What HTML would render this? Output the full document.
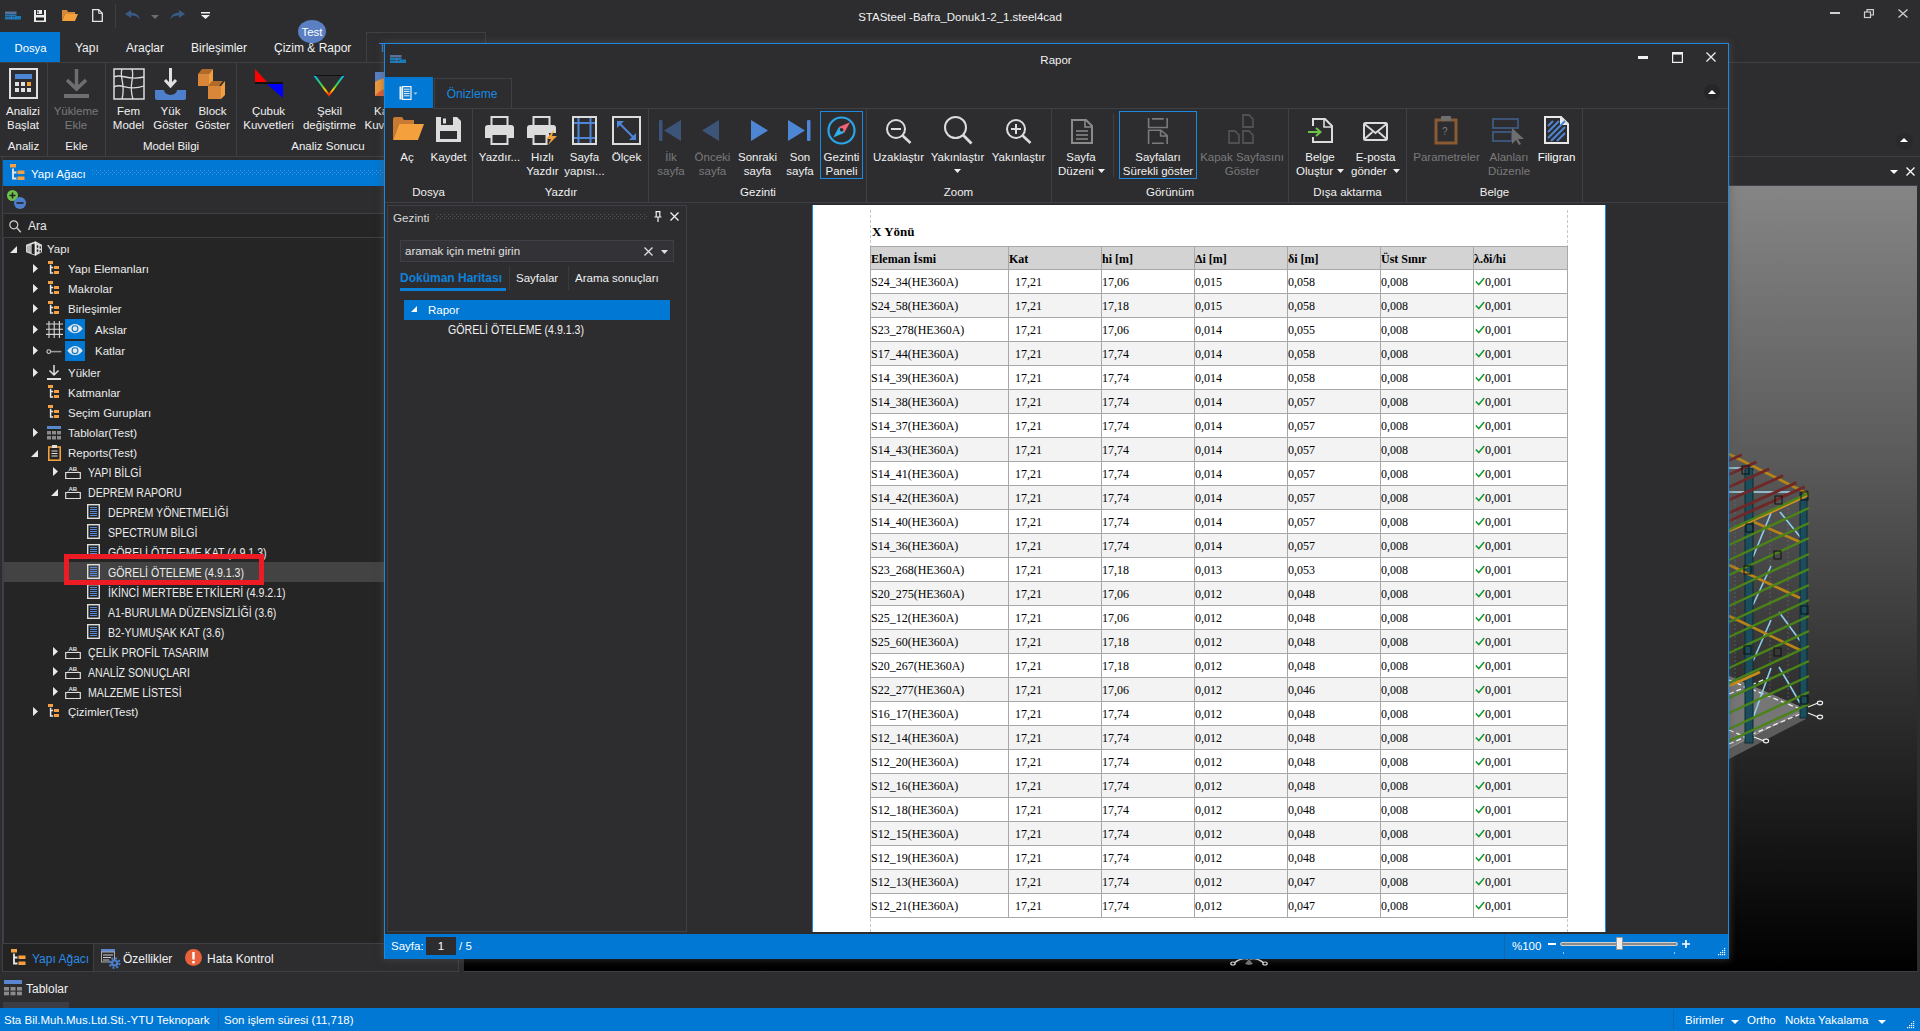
<!DOCTYPE html><html><head><meta charset="utf-8"><style>
*{margin:0;padding:0;box-sizing:border-box}
html,body{width:1920px;height:1031px;overflow:hidden;background:#2d2d30;font-family:"Liberation Sans",sans-serif;font-size:11.5px;color:#f1f1f1}
.a{position:absolute}
.t{position:absolute;white-space:nowrap;line-height:14px}
.c{text-align:center}
.dis{color:#7a7a7a}
svg{position:absolute;overflow:visible}
.ser{font-family:"Liberation Serif",serif;color:#000}
</style></head><body><svg style="left:5px;top:11px;" width="17" height="9" viewBox="0 0 17 9"><rect x="0" y="0.5" width="11.5" height="2.5" fill="#56729a"/><rect x="0" y="3.5" width="11.5" height="2" fill="#1a7bb8"/><rect x="0" y="6" width="11.5" height="2.5" fill="#1a7bb8"/><rect x="10" y="5" width="6" height="3.5" fill="#1a7bb8"/><rect x="6" y="3.5" width="1" height="5" fill="#56729a"/></svg><svg style="left:34px;top:10px;" width="12" height="12" viewBox="0 0 12 12"><path d="M0 0h12v12H0z" fill="#ececec"/><rect x="2" y="0" width="8" height="5" fill="#2d2d30"/><rect x="3" y="0" width="5" height="4" fill="#ececec"/><rect x="3.6" y="0.8" width="1" height="2.4" fill="#2d2d30"/><rect x="2" y="7.5" width="8" height="3" fill="#1e1e1e"/></svg><svg style="left:62px;top:10px;" width="16" height="11" viewBox="0 0 16 11"><path d="M0 0h5l1 2h7v2H3L0 11z" fill="#d8883a"/><path d="M3 4h13l-3 7H0z" fill="#f4a03c"/></svg><svg style="left:92px;top:9px;" width="11" height="13" viewBox="0 0 11 13"><path d="M0.7 0.7h6l3.6 3.6v8H0.7z" fill="none" stroke="#e6e6e6" stroke-width="1.3"/><path d="M6.7 0.7v3.6h3.6" fill="none" stroke="#e6e6e6" stroke-width="1"/></svg><div class="a" style="left:115px;top:4px;width:1px;height:24px;background:#3f3f46"></div><svg style="left:125px;top:10px;" width="16" height="10" viewBox="0 0 16 10"><path d="M6 0L0 4l6 4V5.5c4 0 7 1 9 4.5C14 5 11 3 6 2.5z" fill="#3a5a86"/></svg><svg style="left:151px;top:15px;" width="8" height="4" viewBox="0 0 8 4"><path d="M0 0h8L4 4z" fill="#6d6d6d"/></svg><svg style="left:169px;top:10px;" width="16" height="10" viewBox="0 0 16 10"><path d="M10 0l6 4-6 4V5.5c-4 0-7 1-9 4.5C2 5 5 3 10 2.5z" fill="#3a5a86"/></svg><svg style="left:201px;top:12px;" width="9" height="7" viewBox="0 0 9 7"><rect x="0" y="0" width="9" height="1.5" fill="#f0f0f0"/><path d="M0 3h9L4.5 7z" fill="#f0f0f0"/></svg><div class="t c" style="left:760.0px;top:10px;width:400px;font-size:11.5px;color:#f1f1f1">STASteel -Bafra_Donuk1-2_1.steel4cad</div><div class="a" style="left:1830px;top:12px;width:10px;height:2px;background:#d0d0d0"></div><svg style="left:1864px;top:9px;" width="10" height="9" viewBox="0 0 10 9"><rect x="0.5" y="3" width="6" height="5.5" fill="none" stroke="#d0d0d0" stroke-width="1.2"/><path d="M3 3V0.6h6.4V6H7" fill="none" stroke="#d0d0d0" stroke-width="1.2"/></svg><svg style="left:1898px;top:9px;" width="10" height="9" viewBox="0 0 10 9"><path d="M0.5 0.5l9 8M9.5 0.5l-9 8" stroke="#d0d0d0" stroke-width="1.3"/></svg><div class="a" style="left:0px;top:32px;width:60px;height:30px;background:#0078d4"></div><div class="t" style="left:14.5px;top:41px;font-size:11.3px;color:#fff">Dosya</div><div class="t" style="left:75px;top:41px;font-size:12px">Yapı</div><div class="t" style="left:126px;top:41px;font-size:12px">Araçlar</div><div class="t" style="left:191px;top:41px;font-size:12px">Birleşimler</div><div class="t" style="left:274px;top:41px;font-size:12px">Çizim &amp; Rapor</div><div class="a" style="left:366px;top:32px;width:120px;height:31px;border:1px solid #3f3f46;border-bottom:none;background:#2d2d30"></div><div class="t" style="left:379px;top:41px;font-size:12px;color:#1e90ff">T</div><div class="a" style="left:298px;top:20px;width:28px;height:23px;background:#5a7fc3;border-radius:50%"></div><div class="t c" style="left:292.0px;top:25px;width:40px;font-size:11.5px;color:#fff">Test</div><div class="a" style="left:0px;top:62px;width:1920px;height:1px;background:#3f3f46"></div><div class="a" style="left:0px;top:156px;width:1920px;height:1px;background:#3f3f46"></div><div class="a" style="left:47px;top:63px;width:1px;height:93px;background:#3f3f46"></div><div class="a" style="left:105px;top:63px;width:1px;height:93px;background:#3f3f46"></div><div class="a" style="left:236px;top:63px;width:1px;height:93px;background:#3f3f46"></div><div class="t c" style="left:-76.5px;top:139px;width:200px;font-size:11.5px">Analiz</div><div class="t c" style="left:-23.599999999999994px;top:139px;width:200px;font-size:11.5px">Ekle</div><div class="t c" style="left:71.0px;top:139px;width:200px;font-size:11.5px">Model Bilgi</div><div class="t c" style="left:228.0px;top:139px;width:200px;font-size:11.5px">Analiz Sonucu</div><div class="t c" style="left:-17.0px;top:104px;width:80px;font-size:11.5px;">Analizi</div><div class="t c" style="left:-17.0px;top:118px;width:80px;font-size:11.5px;">Başlat</div><div class="t c" style="left:36.0px;top:104px;width:80px;font-size:11.5px;color:#7a7a7a">Yükleme</div><div class="t c" style="left:36.0px;top:118px;width:80px;font-size:11.5px;color:#7a7a7a">Ekle</div><div class="t c" style="left:88.5px;top:104px;width:80px;font-size:11.5px;">Fem</div><div class="t c" style="left:88.5px;top:118px;width:80px;font-size:11.5px;">Model</div><div class="t c" style="left:130.5px;top:104px;width:80px;font-size:11.5px;">Yük</div><div class="t c" style="left:130.5px;top:118px;width:80px;font-size:11.5px;">Göster</div><div class="t c" style="left:172.5px;top:104px;width:80px;font-size:11.5px;">Block</div><div class="t c" style="left:172.5px;top:118px;width:80px;font-size:11.5px;">Göster</div><div class="t c" style="left:228.5px;top:104px;width:80px;font-size:11.5px;">Çubuk</div><div class="t c" style="left:228.5px;top:118px;width:80px;font-size:11.5px;">Kuvvetleri</div><div class="t c" style="left:289.5px;top:104px;width:80px;font-size:11.5px;">Şekil</div><div class="t c" style="left:289.5px;top:118px;width:80px;font-size:11.5px;">değiştirme</div><div class="t c" style="left:348.5px;top:104px;width:80px;font-size:11.5px;">Kalıcı</div><div class="t c" style="left:348.5px;top:118px;width:80px;font-size:11.5px;">Kuvvetler</div><svg style="left:9px;top:68px;" width="29" height="31" viewBox="0 0 29 31"><rect x="1" y="1" width="27" height="29" fill="none" stroke="#e0e0e0" stroke-width="2"/><rect x="6" y="6" width="17" height="5" fill="#4e86d6"/><rect x="6" y="14" width="4" height="4" fill="#e0e0e0"/><rect x="6" y="20" width="4" height="4" fill="#e0e0e0"/><rect x="12" y="14" width="4" height="4" fill="#e0e0e0"/><rect x="12" y="20" width="4" height="4" fill="#e0e0e0"/><rect x="18" y="14" width="4" height="4" fill="#f4a03c"/><rect x="18" y="20" width="4" height="4" fill="#e0e0e0"/></svg><svg style="left:64px;top:69px;" width="25" height="29" viewBox="0 0 25 29"><path d="M12.5 0v20M3 11l9.5 9 9.5-9" fill="none" stroke="#6e6e6e" stroke-width="3.5"/><rect x="0" y="25" width="25" height="4" fill="#6e6e6e"/></svg><svg style="left:113px;top:68px;" width="32" height="32" viewBox="0 0 32 32"><rect x="1" y="1" width="30" height="30" fill="none" stroke="#dcdcdc" stroke-width="1.5"/><path d="M1 9c8-4 12 4 30 0M1 19c8-5 12 5 30-1M9 1c-3 8 4 15 0 30M19 1c3 10-4 15 1 30" fill="none" stroke="#dcdcdc" stroke-width="1.3"/></svg><svg style="left:155px;top:68px;" width="31" height="32" viewBox="0 0 31 32"><path d="M15.5 0v18M10 12l5.5 6 5.5-6" fill="none" stroke="#e0e0e0" stroke-width="3"/><path d="M0 22h9a6.5 5 0 0 0 13 0h9v8a2 2 0 0 1-2 2H2a2 2 0 0 1-2-2z" fill="#4e7fcc"/></svg><svg style="left:198px;top:69px;" width="29" height="30" viewBox="0 0 29 30"><path d="M0 5l4-5h11l-4 5z" fill="#b06a2a"/><rect x="0" y="5" width="11" height="12" fill="#d9863a"/><path d="M11 5l4-5v12l-4 5z" fill="#f0a040"/><path d="M10 17l4-5h11l-4 5z" fill="#b06a2a"/><rect x="10" y="17" width="13" height="13" fill="#d9863a"/><path d="M23 17l4-5v14l-4 4z" fill="#f0a040"/></svg><svg style="left:255px;top:69px;" width="28" height="29" viewBox="0 0 28 29"><path d="M0 0v13h12z" fill="#ff0000"/><rect x="0" y="13" width="28" height="2" fill="#111"/><path d="M12 15h16v14z" fill="#0000ff"/></svg><svg style="left:314px;top:75px;" width="30" height="21" viewBox="0 0 30 21"><defs><linearGradient id="rb" x1="0" y1="0" x2="0" y2="1"><stop offset="0" stop-color="#00c0ff"/><stop offset="0.5" stop-color="#40d040"/><stop offset="0.75" stop-color="#ffd000"/><stop offset="1" stop-color="#ff2000"/></linearGradient></defs><path d="M0.5 0.5L15 20 29.5 0.5" fill="none" stroke="url(#rb)" stroke-width="2"/><path d="M0.5 0.5h29" stroke="#111" stroke-width="1"/></svg><svg style="left:375px;top:72px;" width="12" height="24" viewBox="0 0 12 24"><rect x="0" y="0" width="12" height="24" fill="#ee9a3c"/><path d="M0 0h12v6C8 6 3 8 0 10z" fill="#5a7fc3"/><path d="M0 24h12v-7C7 17 3 20 0 24z" fill="#e0603a"/></svg><div class="a" style="left:2px;top:157px;width:1px;height:815px;background:#3f3f46"></div><div class="a" style="left:3px;top:160px;width:456px;height:26px;background:#0078d4"></div><svg style="left:10px;top:164px;" width="15" height="17" viewBox="0 0 15 17"><rect x="0" y="0" width="6" height="3.5" fill="#f7a043"/><path d="M3 4.5v10h3.5M3 8.5h3.5" fill="none" stroke="#e8e8e8" stroke-width="1.8"/><rect x="7.5" y="6.5" width="7" height="3.5" fill="#f7a043"/><rect x="7.5" y="12.5" width="7" height="3.5" fill="#f7a043"/></svg><div class="t" style="left:31px;top:167px;font-size:11.5px;color:#fff">Yapı Ağacı</div><svg style="left:92px;top:170px;" width="300" height="6" viewBox="0 0 300 6"><defs><pattern id="dg" width="4" height="4" patternUnits="userSpaceOnUse"><rect x="0" y="0" width="1" height="1" fill="#3d93dc"/><rect x="2" y="2" width="1" height="1" fill="#3d93dc"/></pattern></defs><rect width="300" height="6" fill="url(#dg)"/></svg><div class="a" style="left:3px;top:213px;width:456px;height:1px;background:#3f3f46"></div><svg style="left:7px;top:190px;" width="19" height="19" viewBox="0 0 19 19"><circle cx="5.5" cy="5.5" r="5.5" fill="#6cc24a"/><path d="M5.5 2.5v6M2.5 5.5h6" stroke="#222" stroke-width="1.5"/><circle cx="13" cy="13" r="6" fill="#4e7fcc"/><path d="M9.5 13h7" stroke="#222" stroke-width="1.6"/></svg><div class="a" style="left:4px;top:214px;width:455px;height:24px;background:#252526"></div><div class="a" style="left:4px;top:237px;width:455px;height:1px;background:#3f3f46"></div><svg style="left:9px;top:220px;" width="12" height="13" viewBox="0 0 12 13"><circle cx="4.8" cy="4.8" r="4" fill="none" stroke="#d0d0d0" stroke-width="1.2"/><path d="M7.8 7.8l4 4.5" stroke="#d0d0d0" stroke-width="1.3"/></svg><div class="t" style="left:28px;top:219px;font-size:12px;color:#e8e8e8">Ara</div><div class="a" style="left:3px;top:238px;width:456px;height:705px;background:#252526;border-left:1px solid #3f3f46"></div><div class="a" style="left:3px;top:943px;width:456px;height:1px;background:#3f3f46"></div><div class="a" style="left:4px;top:562px;width:455px;height:20px;background:#434343"></div><svg style="left:10px;top:246px;" width="7" height="7" viewBox="0 0 7 7"><path d="M7 0v7H0z" fill="#e8e8e8"/></svg><svg style="left:26px;top:241px;" width="17" height="16" viewBox="0 0 17 16"><polygon points="0,3.7 9.5,0.3 16,3.7 16,11.3 9.5,14.7 0,11.3" fill="#d4d4d4"/><polygon points="5.6,3.4 8.6,2.4 8.6,13.6 5.6,12.4" fill="#1e1e1e"/><path d="M2 5.2v5.6M4 4.6v6.6" stroke="#8a8a8a" stroke-width="0.9"/><ellipse cx="11.5" cy="5.6" rx="0.8" ry="1.3" fill="#1e1e1e"/><ellipse cx="14.3" cy="6.5" rx="0.7" ry="1.2" fill="#333"/><ellipse cx="11.5" cy="9.6" rx="0.8" ry="1.3" fill="#1e1e1e"/><ellipse cx="14.3" cy="10.3" rx="0.7" ry="1.2" fill="#333"/><path d="M9.5 0.8v13.6" stroke="#eeeeee" stroke-width="1"/></svg><div class="t" style="left:47px;top:242px;font-size:11.5px;color:#ececec">Yapı</div><svg style="left:33px;top:264px;" width="5" height="9" viewBox="0 0 5 9"><path d="M0 0l5 4.5L0 9z" fill="#e8e8e8"/></svg><svg style="left:48px;top:261px;" width="12" height="14" viewBox="0 0 12 14"><rect x="0" y="0" width="5" height="3" fill="#f7a043"/><path d="M2.6 3.8v8.2h2.6M2.6 6.5h2.6" fill="none" stroke="#e8e8e8" stroke-width="1.5"/><rect x="6" y="5" width="5" height="3" fill="#f7a043"/><rect x="6" y="10" width="5" height="3" fill="#f7a043"/></svg><div class="t" style="left:68px;top:262px;font-size:11.5px;color:#ececec">Yapı Elemanları</div><svg style="left:33px;top:284px;" width="5" height="9" viewBox="0 0 5 9"><path d="M0 0l5 4.5L0 9z" fill="#e8e8e8"/></svg><svg style="left:48px;top:281px;" width="12" height="14" viewBox="0 0 12 14"><rect x="0" y="0" width="5" height="3" fill="#f7a043"/><path d="M2.6 3.8v8.2h2.6M2.6 6.5h2.6" fill="none" stroke="#e8e8e8" stroke-width="1.5"/><rect x="6" y="5" width="5" height="3" fill="#f7a043"/><rect x="6" y="10" width="5" height="3" fill="#f7a043"/></svg><div class="t" style="left:68px;top:282px;font-size:11.5px;color:#ececec">Makrolar</div><svg style="left:33px;top:304px;" width="5" height="9" viewBox="0 0 5 9"><path d="M0 0l5 4.5L0 9z" fill="#e8e8e8"/></svg><svg style="left:48px;top:301px;" width="12" height="14" viewBox="0 0 12 14"><rect x="0" y="0" width="5" height="3" fill="#f7a043"/><path d="M2.6 3.8v8.2h2.6M2.6 6.5h2.6" fill="none" stroke="#e8e8e8" stroke-width="1.5"/><rect x="6" y="5" width="5" height="3" fill="#f7a043"/><rect x="6" y="10" width="5" height="3" fill="#f7a043"/></svg><div class="t" style="left:68px;top:302px;font-size:11.5px;color:#ececec">Birleşimler</div><svg style="left:33px;top:325px;" width="5" height="9" viewBox="0 0 5 9"><path d="M0 0l5 4.5L0 9z" fill="#e8e8e8"/></svg><svg style="left:46px;top:321px;" width="17" height="17" viewBox="0 0 17 17"><path d="M3 0v17M8.2 0v17M13.4 0v17M0 3h17M0 8.2h17M0 13.4h17" stroke="#d8d8d8" stroke-width="1.1"/></svg><div class="a" style="left:65px;top:319px;width:20px;height:20px;background:#0078d4"></div><svg style="left:67px;top:324px;" width="16" height="10" viewBox="0 0 16 10"><path d="M0.3 4.7Q8 -4.6 15.7 4.7Q8 14 0.3 4.7z" fill="#e6e6e6"/><circle cx="8" cy="4.7" r="2.9" fill="none" stroke="#0078d4" stroke-width="1.1"/><circle cx="8" cy="4.7" r="1.6" fill="#e6e6e6"/></svg><div class="t" style="left:95px;top:323px;font-size:11.5px;color:#ececec">Akslar</div><svg style="left:33px;top:346px;" width="5" height="9" viewBox="0 0 5 9"><path d="M0 0l5 4.5L0 9z" fill="#e8e8e8"/></svg><svg style="left:46px;top:349px;" width="17" height="6" viewBox="0 0 17 6"><circle cx="2.8" cy="2.6" r="1.9" fill="none" stroke="#d0d0d0" stroke-width="1.1"/><path d="M4.8 2.6h10.6" stroke="#9a9a9a" stroke-width="1.5"/></svg><div class="a" style="left:65px;top:341px;width:20px;height:20px;background:#0078d4"></div><svg style="left:67px;top:346px;" width="16" height="10" viewBox="0 0 16 10"><path d="M0.3 4.7Q8 -4.6 15.7 4.7Q8 14 0.3 4.7z" fill="#e6e6e6"/><circle cx="8" cy="4.7" r="2.9" fill="none" stroke="#0078d4" stroke-width="1.1"/><circle cx="8" cy="4.7" r="1.6" fill="#e6e6e6"/></svg><div class="t" style="left:95px;top:344px;font-size:11.5px;color:#ececec">Katlar</div><svg style="left:33px;top:368px;" width="5" height="9" viewBox="0 0 5 9"><path d="M0 0l5 4.5L0 9z" fill="#e8e8e8"/></svg><svg style="left:47px;top:365px;" width="14" height="15" viewBox="0 0 14 15"><path d="M7 0v10M2.5 5.5L7 10l4.5-4.5" fill="none" stroke="#e0e0e0" stroke-width="1.5"/><rect x="0" y="13" width="14" height="2" fill="#e0e0e0"/></svg><div class="t" style="left:68px;top:366px;font-size:11.5px;color:#ececec">Yükler</div><svg style="left:48px;top:385px;" width="12" height="14" viewBox="0 0 12 14"><rect x="0" y="0" width="5" height="3" fill="#f7a043"/><path d="M2.6 3.8v8.2h2.6M2.6 6.5h2.6" fill="none" stroke="#e8e8e8" stroke-width="1.5"/><rect x="6" y="5" width="5" height="3" fill="#f7a043"/><rect x="6" y="10" width="5" height="3" fill="#f7a043"/></svg><div class="t" style="left:68px;top:386px;font-size:11.5px;color:#ececec">Katmanlar</div><svg style="left:48px;top:405px;" width="12" height="14" viewBox="0 0 12 14"><rect x="0" y="0" width="5" height="3" fill="#f7a043"/><path d="M2.6 3.8v8.2h2.6M2.6 6.5h2.6" fill="none" stroke="#e8e8e8" stroke-width="1.5"/><rect x="6" y="5" width="5" height="3" fill="#f7a043"/><rect x="6" y="10" width="5" height="3" fill="#f7a043"/></svg><div class="t" style="left:68px;top:406px;font-size:11.5px;color:#ececec">Seçim Gurupları</div><svg style="left:33px;top:428px;" width="5" height="9" viewBox="0 0 5 9"><path d="M0 0l5 4.5L0 9z" fill="#e8e8e8"/></svg><svg style="left:47px;top:426px;" width="14" height="14" viewBox="0 0 14 14"><rect x="0" y="0" width="14" height="3" fill="#5a86d0"/><rect x="0" y="5" width="4" height="3.5" fill="#8a8a8a"/><rect x="0" y="10" width="4" height="3.5" fill="#8a8a8a"/><rect x="5" y="5" width="4" height="3.5" fill="#8a8a8a"/><rect x="5" y="10" width="4" height="3.5" fill="#8a8a8a"/><rect x="10" y="5" width="4" height="3.5" fill="#8a8a8a"/><rect x="10" y="10" width="4" height="3.5" fill="#8a8a8a"/></svg><div class="t" style="left:68px;top:426px;font-size:11.5px;color:#ececec">Tablolar(Test)</div><svg style="left:31px;top:450px;" width="7" height="7" viewBox="0 0 7 7"><path d="M7 0v7H0z" fill="#e8e8e8"/></svg><svg style="left:48px;top:445px;" width="13" height="16" viewBox="0 0 13 16"><rect x="0.8" y="2" width="11.4" height="13.2" fill="none" stroke="#f4a03c" stroke-width="1.6"/><rect x="4" y="0" width="5" height="3" fill="#e0e0e0"/><path d="M3.5 6h6M3.5 8.5h6M3.5 11h6" stroke="#e0e0e0" stroke-width="1"/></svg><div class="t" style="left:68px;top:446px;font-size:11.5px;color:#ececec">Reports(Test)</div><svg style="left:53px;top:467px;" width="5" height="9" viewBox="0 0 5 9"><path d="M0 0l5 4.5L0 9z" fill="#e8e8e8"/></svg><svg style="left:65px;top:465px;" width="16" height="14" viewBox="0 0 16 14"><text x="3.5" y="6" font-size="6" font-family="Liberation Sans" fill="#e0e0e0" font-weight="bold">AB</text><path d="M0.7 7.5h14.6v6H0.7z" fill="none" stroke="#e0e0e0" stroke-width="1.2"/><path d="M3 7.5v-1M13 7.5v-1" stroke="#e0e0e0"/></svg><div class="t" style="left:88px;top:466px;font-size:12px;color:#ececec;transform:scaleX(0.883);transform-origin:0 0">YAPI BİLGİ</div><svg style="left:51px;top:489px;" width="7" height="7" viewBox="0 0 7 7"><path d="M7 0v7H0z" fill="#e8e8e8"/></svg><svg style="left:65px;top:485px;" width="16" height="14" viewBox="0 0 16 14"><text x="3.5" y="6" font-size="6" font-family="Liberation Sans" fill="#e0e0e0" font-weight="bold">AB</text><path d="M0.7 7.5h14.6v6H0.7z" fill="none" stroke="#e0e0e0" stroke-width="1.2"/><path d="M3 7.5v-1M13 7.5v-1" stroke="#e0e0e0"/></svg><div class="t" style="left:88px;top:486px;font-size:12px;color:#ececec;transform:scaleX(0.883);transform-origin:0 0">DEPREM RAPORU</div><svg style="left:87px;top:504px;" width="13" height="15" viewBox="0 0 13 15"><rect x="0.7" y="0.7" width="11.6" height="13.6" fill="none" stroke="#dedede" stroke-width="1.4"/><rect x="3" y="3" width="7" height="1" fill="#5a8ad6"/><rect x="3" y="5" width="7" height="1" fill="#5a8ad6"/><rect x="3" y="7" width="7" height="1" fill="#5a8ad6"/><rect x="3" y="9" width="7" height="1" fill="#5a8ad6"/><rect x="3" y="11" width="7" height="1" fill="#5a8ad6"/></svg><div class="t" style="left:108px;top:506px;font-size:12px;color:#ececec;transform:scaleX(0.883);transform-origin:0 0">DEPREM YÖNETMELİĞİ</div><svg style="left:87px;top:524px;" width="13" height="15" viewBox="0 0 13 15"><rect x="0.7" y="0.7" width="11.6" height="13.6" fill="none" stroke="#dedede" stroke-width="1.4"/><rect x="3" y="3" width="7" height="1" fill="#5a8ad6"/><rect x="3" y="5" width="7" height="1" fill="#5a8ad6"/><rect x="3" y="7" width="7" height="1" fill="#5a8ad6"/><rect x="3" y="9" width="7" height="1" fill="#5a8ad6"/><rect x="3" y="11" width="7" height="1" fill="#5a8ad6"/></svg><div class="t" style="left:108px;top:526px;font-size:12px;color:#ececec;transform:scaleX(0.883);transform-origin:0 0">SPECTRUM BİLGİ</div><svg style="left:87px;top:544px;" width="13" height="15" viewBox="0 0 13 15"><rect x="0.7" y="0.7" width="11.6" height="13.6" fill="none" stroke="#dedede" stroke-width="1.4"/><rect x="3" y="3" width="7" height="1" fill="#5a8ad6"/><rect x="3" y="5" width="7" height="1" fill="#5a8ad6"/><rect x="3" y="7" width="7" height="1" fill="#5a8ad6"/><rect x="3" y="9" width="7" height="1" fill="#5a8ad6"/><rect x="3" y="11" width="7" height="1" fill="#5a8ad6"/></svg><div class="t" style="left:108px;top:546px;font-size:12px;color:#ececec;transform:scaleX(0.883);transform-origin:0 0">GÖRELİ ÖTELEME KAT (4.9.1.3)</div><svg style="left:87px;top:564px;" width="13" height="15" viewBox="0 0 13 15"><rect x="0.7" y="0.7" width="11.6" height="13.6" fill="none" stroke="#dedede" stroke-width="1.4"/><rect x="3" y="3" width="7" height="1" fill="#5a8ad6"/><rect x="3" y="5" width="7" height="1" fill="#5a8ad6"/><rect x="3" y="7" width="7" height="1" fill="#5a8ad6"/><rect x="3" y="9" width="7" height="1" fill="#5a8ad6"/><rect x="3" y="11" width="7" height="1" fill="#5a8ad6"/></svg><div class="t" style="left:108px;top:566px;font-size:12px;color:#ececec;transform:scaleX(0.883);transform-origin:0 0">GÖRELİ ÖTELEME (4.9.1.3)</div><svg style="left:87px;top:584px;" width="13" height="15" viewBox="0 0 13 15"><rect x="0.7" y="0.7" width="11.6" height="13.6" fill="none" stroke="#dedede" stroke-width="1.4"/><rect x="3" y="3" width="7" height="1" fill="#5a8ad6"/><rect x="3" y="5" width="7" height="1" fill="#5a8ad6"/><rect x="3" y="7" width="7" height="1" fill="#5a8ad6"/><rect x="3" y="9" width="7" height="1" fill="#5a8ad6"/><rect x="3" y="11" width="7" height="1" fill="#5a8ad6"/></svg><div class="t" style="left:108px;top:586px;font-size:12px;color:#ececec;transform:scaleX(0.883);transform-origin:0 0">İKİNCİ MERTEBE ETKİLERİ (4.9.2.1)</div><svg style="left:87px;top:604px;" width="13" height="15" viewBox="0 0 13 15"><rect x="0.7" y="0.7" width="11.6" height="13.6" fill="none" stroke="#dedede" stroke-width="1.4"/><rect x="3" y="3" width="7" height="1" fill="#5a8ad6"/><rect x="3" y="5" width="7" height="1" fill="#5a8ad6"/><rect x="3" y="7" width="7" height="1" fill="#5a8ad6"/><rect x="3" y="9" width="7" height="1" fill="#5a8ad6"/><rect x="3" y="11" width="7" height="1" fill="#5a8ad6"/></svg><div class="t" style="left:108px;top:606px;font-size:12px;color:#ececec;transform:scaleX(0.883);transform-origin:0 0">A1-BURULMA DÜZENSİZLİĞİ (3.6)</div><svg style="left:87px;top:624px;" width="13" height="15" viewBox="0 0 13 15"><rect x="0.7" y="0.7" width="11.6" height="13.6" fill="none" stroke="#dedede" stroke-width="1.4"/><rect x="3" y="3" width="7" height="1" fill="#5a8ad6"/><rect x="3" y="5" width="7" height="1" fill="#5a8ad6"/><rect x="3" y="7" width="7" height="1" fill="#5a8ad6"/><rect x="3" y="9" width="7" height="1" fill="#5a8ad6"/><rect x="3" y="11" width="7" height="1" fill="#5a8ad6"/></svg><div class="t" style="left:108px;top:626px;font-size:12px;color:#ececec;transform:scaleX(0.883);transform-origin:0 0">B2-YUMUŞAK KAT (3.6)</div><svg style="left:53px;top:647px;" width="5" height="9" viewBox="0 0 5 9"><path d="M0 0l5 4.5L0 9z" fill="#e8e8e8"/></svg><svg style="left:65px;top:645px;" width="16" height="14" viewBox="0 0 16 14"><text x="3.5" y="6" font-size="6" font-family="Liberation Sans" fill="#e0e0e0" font-weight="bold">AB</text><path d="M0.7 7.5h14.6v6H0.7z" fill="none" stroke="#e0e0e0" stroke-width="1.2"/><path d="M3 7.5v-1M13 7.5v-1" stroke="#e0e0e0"/></svg><div class="t" style="left:88px;top:646px;font-size:12px;color:#ececec;transform:scaleX(0.883);transform-origin:0 0">ÇELİK PROFİL TASARIM</div><svg style="left:53px;top:667px;" width="5" height="9" viewBox="0 0 5 9"><path d="M0 0l5 4.5L0 9z" fill="#e8e8e8"/></svg><svg style="left:65px;top:665px;" width="16" height="14" viewBox="0 0 16 14"><text x="3.5" y="6" font-size="6" font-family="Liberation Sans" fill="#e0e0e0" font-weight="bold">AB</text><path d="M0.7 7.5h14.6v6H0.7z" fill="none" stroke="#e0e0e0" stroke-width="1.2"/><path d="M3 7.5v-1M13 7.5v-1" stroke="#e0e0e0"/></svg><div class="t" style="left:88px;top:666px;font-size:12px;color:#ececec;transform:scaleX(0.883);transform-origin:0 0">ANALİZ SONUÇLARI</div><svg style="left:53px;top:687px;" width="5" height="9" viewBox="0 0 5 9"><path d="M0 0l5 4.5L0 9z" fill="#e8e8e8"/></svg><svg style="left:65px;top:685px;" width="16" height="14" viewBox="0 0 16 14"><text x="3.5" y="6" font-size="6" font-family="Liberation Sans" fill="#e0e0e0" font-weight="bold">AB</text><path d="M0.7 7.5h14.6v6H0.7z" fill="none" stroke="#e0e0e0" stroke-width="1.2"/><path d="M3 7.5v-1M13 7.5v-1" stroke="#e0e0e0"/></svg><div class="t" style="left:88px;top:686px;font-size:12px;color:#ececec;transform:scaleX(0.883);transform-origin:0 0">MALZEME LİSTESİ</div><svg style="left:33px;top:707px;" width="5" height="9" viewBox="0 0 5 9"><path d="M0 0l5 4.5L0 9z" fill="#e8e8e8"/></svg><svg style="left:48px;top:704px;" width="12" height="14" viewBox="0 0 12 14"><rect x="0" y="0" width="5" height="3" fill="#f7a043"/><path d="M2.6 3.8v8.2h2.6M2.6 6.5h2.6" fill="none" stroke="#e8e8e8" stroke-width="1.5"/><rect x="6" y="5" width="5" height="3" fill="#f7a043"/><rect x="6" y="10" width="5" height="3" fill="#f7a043"/></svg><div class="t" style="left:68px;top:705px;font-size:11.5px;color:#ececec">Çizimler(Test)</div><div class="a" style="left:64px;top:554px;width:200px;height:31px;border:5px solid #ed1c24"></div><div class="a" style="left:3px;top:944px;width:456px;height:28px;background:#2d2d30;border:1px solid #3f3f46;border-top:none"></div><div class="a" style="left:3px;top:944px;width:91px;height:27px;background:#232323;border-right:1px solid #3f3f46"></div><svg style="left:11px;top:949px;" width="15" height="17" viewBox="0 0 15 17"><rect x="0" y="0" width="6" height="3.5" fill="#f7a043"/><path d="M3 4.5v10h3.5M3 8.5h3.5" fill="none" stroke="#e8e8e8" stroke-width="1.8"/><rect x="7.5" y="6.5" width="7" height="3.5" fill="#f7a043"/><rect x="7.5" y="12.5" width="7" height="3.5" fill="#f7a043"/></svg><div class="t" style="left:32px;top:952px;font-size:12px;color:#2b8ce8">Yapı Ağacı</div><svg style="left:101px;top:949px;" width="19" height="19" viewBox="0 0 19 19"><rect x="0" y="0" width="14" height="3" fill="#5a86d0"/><rect x="0.5" y="3" width="13" height="10" fill="none" stroke="#aaa" stroke-width="1"/><path d="M2 6h10M2 8.5h8M2 11h6" stroke="#ccc" stroke-width="1"/><circle cx="13.6" cy="14" r="3.6" fill="#4e7fcc"/><circle cx="13.6" cy="14" r="4.8" fill="none" stroke="#4e7fcc" stroke-width="2.2" stroke-dasharray="1.9 1.87"/><circle cx="13.6" cy="14" r="1.4" fill="#2d2d30"/></svg><div class="t" style="left:123px;top:952px;font-size:12px">Özellikler</div><svg style="left:185px;top:949px;" width="18" height="18" viewBox="0 0 18 18"><circle cx="8.5" cy="8.5" r="8.5" fill="#e8603c"/><rect x="7.3" y="3" width="2.4" height="7.5" fill="#fff"/><rect x="7.3" y="12" width="2.4" height="2.4" fill="#fff"/></svg><div class="t" style="left:207px;top:952px;font-size:12px">Hata Kontrol</div><svg style="left:4px;top:980px;" width="18" height="16" viewBox="0 0 18 16"><rect x="0" y="0" width="18" height="4" fill="#5a86d0"/><rect x="0.0" y="7.0" width="5" height="3.6" fill="#8a8a8a"/><rect x="0.0" y="11.7" width="5" height="3.6" fill="#8a8a8a"/><rect x="6.5" y="7.0" width="5" height="3.6" fill="#8a8a8a"/><rect x="6.5" y="11.7" width="5" height="3.6" fill="#8a8a8a"/><rect x="13.0" y="7.0" width="5" height="3.6" fill="#8a8a8a"/><rect x="13.0" y="11.7" width="5" height="3.6" fill="#8a8a8a"/></svg><div class="t" style="left:26px;top:982px;font-size:12px">Tablolar</div><div class="a" style="left:3px;top:1002px;width:66px;height:6px;background:#3c3c44"></div><div class="a" style="left:0px;top:1008px;width:1920px;height:23px;background:#0078d4"></div><div class="t" style="left:4px;top:1013px;font-size:11.5px;color:#fff">Sta Bil.Muh.Mus.Ltd.Sti.-YTU Teknopark</div><div class="a" style="left:218px;top:1010px;width:1px;height:19px;background:#1a64a8"></div><div class="t" style="left:224px;top:1013px;font-size:11.5px;color:#fff">Son işlem süresi (11,718)</div><div class="a" style="left:1673px;top:1010px;width:1px;height:19px;background:#1a64a8"></div><div class="t" style="left:1685px;top:1013px;font-size:11.5px;color:#fff">Birimler</div><svg style="left:1731px;top:1020px;" width="8" height="4" viewBox="0 0 8 4"><path d="M0 0h8L4 4z" fill="#fff"/></svg><div class="t" style="left:1747px;top:1013px;font-size:11.5px;color:#fff">Ortho</div><div class="t" style="left:1785px;top:1013px;font-size:11.5px;color:#fff">Nokta Yakalama</div><svg style="left:1878px;top:1020px;" width="8" height="4" viewBox="0 0 8 4"><path d="M0 0h8L4 4z" fill="#fff"/></svg><svg style="left:1907px;top:1021px;" width="8" height="8" viewBox="0 0 8 8"><rect x="6" y="0" width="1.2" height="1.2" fill="#fff"/><rect x="6" y="2" width="1.2" height="1.2" fill="#fff"/><rect x="4" y="2" width="1.2" height="1.2" fill="#fff"/><rect x="6" y="4" width="1.2" height="1.2" fill="#fff"/><rect x="4" y="4" width="1.2" height="1.2" fill="#fff"/><rect x="2" y="4" width="1.2" height="1.2" fill="#fff"/><rect x="6" y="6" width="1.2" height="1.2" fill="#fff"/><rect x="4" y="6" width="1.2" height="1.2" fill="#fff"/><rect x="2" y="6" width="1.2" height="1.2" fill="#fff"/><rect x="0" y="6" width="1.2" height="1.2" fill="#fff"/></svg><div class="a" style="left:1896px;top:133px;width:17px;height:17px;background:#29292b;border-radius:50%"></div><svg style="left:1900px;top:138px;" width="8" height="4" viewBox="0 0 8 4"><path d="M0 4h8L4 0z" fill="#fff"/></svg><svg style="left:1890px;top:170px;" width="8" height="4" viewBox="0 0 8 4"><path d="M0 0h8L4 4z" fill="#fff"/></svg><svg style="left:1906px;top:167px;" width="9" height="9" viewBox="0 0 9 9"><path d="M0.5 0.5l8 8M8.5 0.5l-8 8" stroke="#fff" stroke-width="1.3"/></svg><div class="a" style="left:464px;top:185px;width:1454px;height:1px;background:#3f3f46"></div><div class="a" style="left:464px;top:186px;width:1453px;height:785px;background:linear-gradient(#858585 0%,#5a5a5a 35%,#2f2f2f 65%,#141414 85%,#000 100%)"></div><div class="a" style="left:464px;top:971px;width:1454px;height:1px;background:#3f3f46"></div><svg style="left:1729px;top:440px;" width="100" height="320" viewBox="0 0 100 320"><polygon points="0,236 77,269 77,279 0,319" fill="#5c5c5c"/><polygon points="0,236 77,269 0,308" fill="#767676"/><line x1="0" y1="308" x2="77" y2="269" stroke="#9a9a9a" stroke-width="1" /><line x1="0" y1="240" x2="71" y2="269" stroke="#f0f0f0" stroke-width="1.3" stroke-dasharray="5,3"/><line x1="0" y1="254" x2="39" y2="238" stroke="#f0f0f0" stroke-width="1.3" stroke-dasharray="5,3"/><line x1="0" y1="304" x2="76" y2="272" stroke="#f0f0f0" stroke-width="1.3" stroke-dasharray="5,3"/><line x1="0" y1="290" x2="16" y2="297" stroke="#f0f0f0" stroke-width="1.3" stroke-dasharray="5,3"/><line x1="0" y1="28" x2="24" y2="28" stroke="#a8d8f0" stroke-width="1.5" /><line x1="0" y1="52" x2="61" y2="52" stroke="#a8d8f0" stroke-width="1.5" /><line x1="6" y1="60" x2="6" y2="260" stroke="#7a7a7a" stroke-width="0.5" stroke-dasharray="2,2"/><line x1="41" y1="60" x2="41" y2="260" stroke="#7a7a7a" stroke-width="0.5" stroke-dasharray="2,2"/><line x1="59" y1="60" x2="59" y2="260" stroke="#7a7a7a" stroke-width="0.5" stroke-dasharray="2,2"/><line x1="24" y1="31" x2="18" y2="70" stroke="#8ccff0" stroke-width="1.6" /><line x1="42" y1="73" x2="24" y2="117" stroke="#8ccff0" stroke-width="1.6" /><line x1="51" y1="72" x2="72" y2="98" stroke="#8ccff0" stroke-width="1.6" /><line x1="42" y1="126" x2="24" y2="165" stroke="#8ccff0" stroke-width="1.6" /><line x1="42" y1="180" x2="24" y2="221" stroke="#8ccff0" stroke-width="1.6" /><line x1="50" y1="172" x2="72" y2="202" stroke="#8ccff0" stroke-width="1.6" /><line x1="42" y1="228" x2="24" y2="278" stroke="#8ccff0" stroke-width="1.6" /><line x1="50" y1="227" x2="71" y2="263" stroke="#8ccff0" stroke-width="1.6" /><rect x="16" y="28" width="8" height="275" fill="#1b4d5c" stroke="#0c2a33" stroke-width="1"/><rect x="71" y="51" width="7" height="227" fill="#1b4d5c" stroke="#0c2a33" stroke-width="1"/><line x1="0" y1="14" x2="79" y2="54" stroke="#b98416" stroke-width="2.6" /><line x1="25" y1="82" x2="71" y2="102" stroke="#b98416" stroke-width="2.6" /><line x1="0" y1="125" x2="71" y2="158" stroke="#b98416" stroke-width="2.6" /><line x1="0" y1="176" x2="71" y2="210" stroke="#b98416" stroke-width="2.6" /><line x1="0" y1="91" x2="79" y2="55" stroke="#d49020" stroke-width="3" /><line x1="0" y1="246" x2="31" y2="232" stroke="#c88a1a" stroke-width="3" /><line x1="0" y1="20.5" x2="12.770833333333258" y2="14.753125000000011" stroke="#6e2828" stroke-width="3" /><line x1="0" y1="34.5" x2="27.354166666666742" y2="22.19062500000001" stroke="#6e2828" stroke-width="3" /><line x1="0" y1="47" x2="40.375" y2="28.83125000000001" stroke="#6e2828" stroke-width="3" /><line x1="0" y1="60" x2="53.91666666666674" y2="35.73750000000001" stroke="#6e2828" stroke-width="3" /><line x1="0" y1="73" x2="67.45833333333326" y2="42.64375000000001" stroke="#6e2828" stroke-width="3" /><line x1="0" y1="81" x2="75.79166666666674" y2="46.89375000000001" stroke="#6e2828" stroke-width="3" /><line x1="0" y1="90" x2="80" y2="53" stroke="#4a8418" stroke-width="2.4" /><line x1="0" y1="105" x2="80" y2="68" stroke="#4a8418" stroke-width="2.4" /><line x1="0" y1="120" x2="80" y2="83" stroke="#4a8418" stroke-width="2.4" /><line x1="0" y1="135" x2="80" y2="98" stroke="#4a8418" stroke-width="2.4" /><line x1="0" y1="151" x2="80" y2="114" stroke="#4a8418" stroke-width="2.4" /><line x1="0" y1="166" x2="80" y2="129" stroke="#4a8418" stroke-width="2.4" /><line x1="0" y1="182" x2="80" y2="145" stroke="#4a8418" stroke-width="2.4" /><line x1="0" y1="197" x2="80" y2="160" stroke="#4a8418" stroke-width="2.4" /><line x1="0" y1="213" x2="80" y2="176" stroke="#4a8418" stroke-width="2.4" /><line x1="0" y1="228" x2="80" y2="191" stroke="#4a8418" stroke-width="2.4" /><line x1="0" y1="243" x2="80" y2="206" stroke="#4a8418" stroke-width="2.4" /><line x1="0" y1="258" x2="80" y2="221" stroke="#4a8418" stroke-width="2.4" /><line x1="0" y1="273" x2="80" y2="236" stroke="#4a8418" stroke-width="2.4" /><line x1="0" y1="289" x2="80" y2="252" stroke="#4a8418" stroke-width="2.4" /><line x1="0" y1="301" x2="80" y2="264" stroke="#4a8418" stroke-width="2.4" /><rect x="13" y="26" width="7" height="8" fill="none" stroke="#111" stroke-width="1"/><rect x="17" y="84" width="7" height="8" fill="none" stroke="#111" stroke-width="1"/><rect x="72" y="52" width="7" height="8" fill="none" stroke="#111" stroke-width="1"/><rect x="46" y="56" width="7" height="8" fill="none" stroke="#111" stroke-width="1"/><rect x="45" y="111" width="7" height="8" fill="none" stroke="#111" stroke-width="1"/><rect x="15" y="126" width="7" height="8" fill="none" stroke="#111" stroke-width="1"/><rect x="72" y="166" width="7" height="8" fill="none" stroke="#111" stroke-width="1"/><rect x="45" y="208" width="7" height="8" fill="none" stroke="#111" stroke-width="1"/><rect x="15" y="206" width="7" height="8" fill="none" stroke="#111" stroke-width="1"/><rect x="72" y="256" width="7" height="8" fill="none" stroke="#111" stroke-width="1"/><line x1="79" y1="267" x2="89" y2="263" stroke="#f0f0f0" stroke-width="1.3" /><ellipse cx="91" cy="263" rx="2.6" ry="1.8" fill="none" stroke="#f0f0f0" stroke-width="1.2"/><line x1="79" y1="273" x2="89" y2="277" stroke="#f0f0f0" stroke-width="1.3" /><ellipse cx="91" cy="277" rx="2.6" ry="1.8" fill="none" stroke="#f0f0f0" stroke-width="1.2"/><line x1="25" y1="297" x2="35" y2="301" stroke="#f0f0f0" stroke-width="1.3" /><ellipse cx="37" cy="301" rx="2.6" ry="1.8" fill="none" stroke="#f0f0f0" stroke-width="1.2"/></svg><svg style="left:1228px;top:955px;" width="42" height="14" viewBox="0 0 42 14"><path d="M6 8Q14 2 20 4M22 4Q28 2 36 8" fill="none" stroke="#e8e8e8" stroke-width="1.4"/><ellipse cx="5" cy="8.5" rx="2.2" ry="1.5" fill="none" stroke="#e8e8e8" stroke-width="1.2"/><ellipse cx="37" cy="8.5" rx="2.2" ry="1.5" fill="none" stroke="#e8e8e8" stroke-width="1.2"/><path d="M17 9l4-5v6zM21 4l4 5-4 1z" fill="#777"/></svg><div class="a" style="left:384px;top:43px;width:1345px;height:916px;box-shadow:0 0 7px 1px rgba(85,85,85,0.5);background:#2d2d30"></div><div class="a" style="left:384px;top:43px;width:1345px;height:916px;border:1px solid #1c8ae0;background:#2d2d30"></div><svg style="left:390px;top:55px;" width="17" height="9" viewBox="0 0 17 9"><rect x="0" y="0" width="11.5" height="2.5" fill="#56729a"/><rect x="0" y="3" width="11.5" height="2" fill="#1a7bb8"/><rect x="0" y="5.5" width="11.5" height="2.5" fill="#1a7bb8"/><rect x="10" y="4.5" width="6" height="3.5" fill="#1a7bb8"/><rect x="6" y="3" width="1" height="5" fill="#56729a"/></svg><div class="t c" style="left:1006.0px;top:53px;width:100px;font-size:11.5px;color:#f1f1f1">Rapor</div><div class="a" style="left:1638px;top:56px;width:10px;height:3px;background:#f0f0f0"></div><svg style="left:1672px;top:52px;" width="11" height="11" viewBox="0 0 11 11"><rect x="0.6" y="0.6" width="9.8" height="9.8" fill="none" stroke="#f0f0f0" stroke-width="1.2"/><rect x="0.6" y="0.6" width="9.8" height="2" fill="#f0f0f0"/></svg><svg style="left:1706px;top:52px;" width="10" height="10" viewBox="0 0 10 10"><path d="M0.5 0.5l9 9M9.5 0.5l-9 9" stroke="#f0f0f0" stroke-width="1.3"/></svg><div class="a" style="left:385px;top:77px;width:48px;height:31px;background:#0078d4"></div><svg style="left:399px;top:86px;" width="20" height="14" viewBox="0 0 20 14"><rect x="0.5" y="0.5" width="2.2" height="13" fill="#f4f4f4"/><rect x="3.6" y="0.6" width="8.4" height="12.8" fill="none" stroke="#f4f4f4" stroke-width="1.2"/><path d="M5 3.2h5.6M5 5.4h5.6M5 7.6h5.6M5 9.8h5.6" stroke="#f4f4f4" stroke-width="1"/><path d="M14.5 6.5h4l-2 2.2z" fill="#b8c8d8"/></svg><div class="a" style="left:433px;top:108px;width:1295px;height:1px;background:#3f3f46"></div><div class="a" style="left:434px;top:78px;width:78px;height:30px;border:1px solid #3f3f46;border-bottom:none;background:#2d2d30"></div><div class="t c" style="left:432.0px;top:87px;width:80px;font-size:12px;color:#168ae0">Önizleme</div><div class="a" style="left:1704px;top:84px;width:16px;height:16px;background:#262628;border-radius:50%"></div><svg style="left:1708px;top:90px;" width="8" height="4" viewBox="0 0 8 4"><path d="M0 4h8L4 0z" fill="#fff"/></svg><div class="a" style="left:385px;top:202px;width:1343px;height:1px;background:#3f3f46"></div><div class="a" style="left:472px;top:108px;width:1px;height:94px;background:#3f3f46"></div><div class="a" style="left:648px;top:108px;width:1px;height:94px;background:#3f3f46"></div><div class="a" style="left:866px;top:108px;width:1px;height:94px;background:#3f3f46"></div><div class="a" style="left:1051px;top:108px;width:1px;height:94px;background:#3f3f46"></div><div class="a" style="left:1288px;top:108px;width:1px;height:94px;background:#3f3f46"></div><div class="a" style="left:1406px;top:108px;width:1px;height:94px;background:#3f3f46"></div><div class="a" style="left:1582px;top:108px;width:1px;height:94px;background:#3f3f46"></div><div class="a" style="left:1113px;top:113px;width:1px;height:64px;background:#3f3f46"></div><div class="t c" style="left:368.5px;top:185px;width:120px;font-size:11.5px;color:#f1f1f1">Dosya</div><div class="t c" style="left:501.0px;top:185px;width:120px;font-size:11.5px;color:#f1f1f1">Yazdır</div><div class="t c" style="left:698.0px;top:185px;width:120px;font-size:11.5px;color:#f1f1f1">Gezinti</div><div class="t c" style="left:898.5px;top:185px;width:120px;font-size:11.5px;color:#f1f1f1">Zoom</div><div class="t c" style="left:1110.0px;top:185px;width:120px;font-size:11.5px;color:#f1f1f1">Görünüm</div><div class="t c" style="left:1287.5px;top:185px;width:120px;font-size:11.5px;color:#f1f1f1">Dışa aktarma</div><div class="t c" style="left:1434.5px;top:185px;width:120px;font-size:11.5px;color:#f1f1f1">Belge</div><div class="a" style="left:820px;top:111px;width:43px;height:68px;border:1px solid #1c8ae0"></div><div class="a" style="left:1119px;top:111px;width:78px;height:68px;border:1px solid #1c8ae0"></div><div class="t c" style="left:357.0px;top:150px;width:100px;font-size:11.5px;color:#f1f1f1">Aç</div><div class="t c" style="left:398.5px;top:150px;width:100px;font-size:11.5px;color:#f1f1f1">Kaydet</div><div class="t c" style="left:449.5px;top:150px;width:100px;font-size:11.5px;color:#f1f1f1">Yazdır...</div><div class="t c" style="left:492.5px;top:150px;width:100px;font-size:11.5px;color:#f1f1f1">Hızlı</div><div class="t c" style="left:492.5px;top:164px;width:100px;font-size:11.5px;color:#f1f1f1">Yazdır</div><div class="t c" style="left:534.5px;top:150px;width:100px;font-size:11.5px;color:#f1f1f1">Sayfa</div><div class="t c" style="left:534.5px;top:164px;width:100px;font-size:11.5px;color:#f1f1f1">yapısı...</div><div class="t c" style="left:576.5px;top:150px;width:100px;font-size:11.5px;color:#f1f1f1">Ölçek</div><div class="t c" style="left:621.0px;top:150px;width:100px;font-size:11.5px;color:#7a7a7a">İlk</div><div class="t c" style="left:621.0px;top:164px;width:100px;font-size:11.5px;color:#7a7a7a">sayfa</div><div class="t c" style="left:662.5px;top:150px;width:100px;font-size:11.5px;color:#7a7a7a">Önceki</div><div class="t c" style="left:662.5px;top:164px;width:100px;font-size:11.5px;color:#7a7a7a">sayfa</div><div class="t c" style="left:707.5px;top:150px;width:100px;font-size:11.5px;color:#f1f1f1">Sonraki</div><div class="t c" style="left:707.5px;top:164px;width:100px;font-size:11.5px;color:#f1f1f1">sayfa</div><div class="t c" style="left:750.0px;top:150px;width:100px;font-size:11.5px;color:#f1f1f1">Son</div><div class="t c" style="left:750.0px;top:164px;width:100px;font-size:11.5px;color:#f1f1f1">sayfa</div><div class="t c" style="left:791.5px;top:150px;width:100px;font-size:11.5px;color:#f1f1f1">Gezinti</div><div class="t c" style="left:791.5px;top:164px;width:100px;font-size:11.5px;color:#f1f1f1">Paneli</div><div class="t c" style="left:848.5px;top:150px;width:100px;font-size:11.5px;color:#f1f1f1">Uzaklaştır</div><div class="t c" style="left:907.5px;top:150px;width:100px;font-size:11.5px;color:#f1f1f1">Yakınlaştır</div><div class="t c" style="left:968.5px;top:150px;width:100px;font-size:11.5px;color:#f1f1f1">Yakınlaştır</div><div class="t c" style="left:1031.0px;top:150px;width:100px;font-size:11.5px;color:#f1f1f1">Sayfa</div><div class="t c" style="left:1108.0px;top:150px;width:100px;font-size:11.5px;color:#f1f1f1">Sayfaları</div><div class="t c" style="left:1108.0px;top:164px;width:100px;font-size:11.5px;color:#f1f1f1">Sürekli göster</div><div class="t c" style="left:1192.0px;top:150px;width:100px;font-size:11.5px;color:#7a7a7a">Kapak Sayfasını</div><div class="t c" style="left:1192.0px;top:164px;width:100px;font-size:11.5px;color:#7a7a7a">Göster</div><div class="t c" style="left:1270.0px;top:150px;width:100px;font-size:11.5px;color:#f1f1f1">Belge</div><div class="t c" style="left:1325.5px;top:150px;width:100px;font-size:11.5px;color:#f1f1f1">E-posta</div><div class="t c" style="left:1396.5px;top:150px;width:100px;font-size:11.5px;color:#7a7a7a">Parametreler</div><div class="t c" style="left:1459.0px;top:150px;width:100px;font-size:11.5px;color:#7a7a7a">Alanları</div><div class="t c" style="left:1459.0px;top:164px;width:100px;font-size:11.5px;color:#7a7a7a">Düzenle</div><div class="t c" style="left:1506.5px;top:150px;width:100px;font-size:11.5px;color:#fff">Filigran</div><div class="t" style="left:1058px;top:164px;font-size:11.5px;color:#f1f1f1">Düzeni</div><div class="t" style="left:1296px;top:164px;font-size:11.5px;color:#f1f1f1">Oluştur</div><div class="t" style="left:1351px;top:164px;font-size:11.5px;color:#f1f1f1">gönder</div><svg style="left:953.5px;top:169px;" width="7" height="4" viewBox="0 0 7 4"><path d="M0 0h7L3.5 4z" fill="#f0f0f0"/></svg><svg style="left:1097.5px;top:169px;" width="7" height="4" viewBox="0 0 7 4"><path d="M0 0h7L3.5 4z" fill="#f0f0f0"/></svg><svg style="left:1337.0px;top:169px;" width="7" height="4" viewBox="0 0 7 4"><path d="M0 0h7L3.5 4z" fill="#f0f0f0"/></svg><svg style="left:1392.5px;top:169px;" width="7" height="4" viewBox="0 0 7 4"><path d="M0 0h7L3.5 4z" fill="#f0f0f0"/></svg><svg style="left:393px;top:117px;" width="31" height="24" viewBox="0 0 31 24"><path d="M0 2a2 2 0 0 1 2-2h7l2 3h10v4H6L0 23z" fill="#c87a32"/><path d="M6 7h25l-6 16H0z" fill="#f4a03c"/></svg><svg style="left:436px;top:117px;" width="25" height="25" viewBox="0 0 25 25"><path d="M0 0h21l4 4v21H0z" fill="#dcdcdc"/><rect x="5" y="0" width="12" height="8" fill="#2d2d30"/><rect x="7" y="1.5" width="3" height="5" fill="#dcdcdc"/><rect x="4" y="14" width="17" height="8" fill="#2d2d30"/></svg><svg style="left:485px;top:116px;" width="29" height="29" viewBox="0 0 29 29"><rect x="6.5" y="1" width="16" height="9" fill="none" stroke="#dcdcdc" stroke-width="2"/><path d="M0 12a3 3 0 0 1 3-3h23a3 3 0 0 1 3 3v10H0z" fill="#dcdcdc"/><rect x="6.5" y="18" width="16" height="10" fill="#2d2d30" stroke="#dcdcdc" stroke-width="2"/></svg><svg style="left:527px;top:116px;" width="32" height="29" viewBox="0 0 32 29"><rect x="6.5" y="1" width="16" height="9" fill="none" stroke="#dcdcdc" stroke-width="2"/><path d="M0 12a3 3 0 0 1 3-3h23a3 3 0 0 1 3 3v5H0z" fill="#dcdcdc"/><path d="M0 17h22v5H0z" fill="#dcdcdc"/><rect x="6.5" y="18" width="13" height="10" fill="#2d2d30" stroke="#dcdcdc" stroke-width="2"/><path d="M27 14l-8 9h5l-3 6 9-9h-5z" fill="#f4a03c"/></svg><svg style="left:572px;top:116px;" width="25" height="29" viewBox="0 0 25 29"><rect x="1" y="1" width="23" height="27" fill="none" stroke="#dcdcdc" stroke-width="2"/><path d="M6.5 2v25M18.5 2v25M2 7h21M2 22h21" stroke="#4e86d6" stroke-width="2"/></svg><svg style="left:612px;top:116px;" width="29" height="29" viewBox="0 0 29 29"><rect x="1" y="1" width="27" height="27" fill="none" stroke="#dcdcdc" stroke-width="2"/><path d="M6 6l17 17" stroke="#4e86d6" stroke-width="2"/><path d="M5 5h7l-7 7zM24 24h-7l7-7z" fill="#4e86d6"/></svg><svg style="left:659px;top:120px;" width="23" height="21" viewBox="0 0 23 21"><rect x="0" y="0" width="3.5" height="21" rx="1" fill="#3b5478"/><path d="M22 0v21L5 10.5z" fill="#3b5478"/></svg><svg style="left:702px;top:120px;" width="17" height="21" viewBox="0 0 17 21"><path d="M17 0v21L0 10.5z" fill="#3b5478"/></svg><svg style="left:751px;top:120px;" width="17" height="21" viewBox="0 0 17 21"><path d="M0 0v21l17-10.5z" fill="#4e86d6"/></svg><svg style="left:788px;top:120px;" width="23" height="21" viewBox="0 0 23 21"><path d="M0 0v21l17-10.5z" fill="#4e86d6"/><rect x="19" y="0" width="3.5" height="21" rx="1" fill="#4e86d6"/></svg><svg style="left:827px;top:116px;" width="29" height="29" viewBox="0 0 29 29"><circle cx="14.5" cy="14.5" r="13" fill="none" stroke="#2aa6e8" stroke-width="2.2"/><path d="M23 6.3L11.9 10.9 17.3 16.7z" fill="#ee6478"/><path d="M6.3 21.6L11.9 10.9 17.3 16.7z" fill="#2fb0ea"/><circle cx="14.6" cy="13.8" r="1.8" fill="#2d2d30"/></svg><svg style="left:886px;top:119px;" width="26" height="25" viewBox="0 0 26 25"><circle cx="10" cy="10" r="9" fill="none" stroke="#dcdcdc" stroke-width="2"/><path d="M16.5 16.5l8 7.5" stroke="#dcdcdc" stroke-width="2.6"/><path d="M5 10h10" stroke="#dcdcdc" stroke-width="2"/></svg><svg style="left:944px;top:116px;" width="28" height="28" viewBox="0 0 28 28"><circle cx="11.5" cy="11.5" r="10.5" fill="none" stroke="#dcdcdc" stroke-width="2"/><path d="M19 19l8.5 8.5" stroke="#dcdcdc" stroke-width="2.8"/></svg><svg style="left:1006px;top:119px;" width="26" height="25" viewBox="0 0 26 25"><circle cx="10" cy="10" r="9" fill="none" stroke="#dcdcdc" stroke-width="2"/><path d="M16.5 16.5l8 7.5" stroke="#dcdcdc" stroke-width="2.6"/><path d="M5 10h10M10 5v10" stroke="#dcdcdc" stroke-width="2"/></svg><svg style="left:1071px;top:119px;" width="22" height="25" viewBox="0 0 22 25"><path d="M1 1h14l6 6v17H1z" fill="none" stroke="#8a8a8a" stroke-width="2"/><path d="M14 1v7h7" fill="none" stroke="#8a8a8a" stroke-width="1.6"/><path d="M5 12h12M5 16h12M5 20h12" stroke="#8a8a8a" stroke-width="1.6"/></svg><svg style="left:1147px;top:117px;" width="22" height="28" viewBox="0 0 22 28"><path d="M1.6 1V10.5H20.2V1M5 1.9H16.8" fill="none" stroke="#7a7a7a" stroke-width="1.6"/><path d="M1.6 27V13.2H14L20.2 18.6V27M5 26.2H16.8M13.6 13.2V19H20.2" fill="none" stroke="#7a7a7a" stroke-width="1.6"/></svg><svg style="left:1228px;top:114px;" width="27" height="30" viewBox="0 0 27 30"><path d="M15 1h6l4 4v8H15z" fill="none" stroke="#505054" stroke-width="1.8"/><path d="M1 17h6l4 4v8H1zM15 17h6l4 4v8H15z" fill="none" stroke="#505054" stroke-width="1.8"/></svg><svg style="left:1308px;top:118px;" width="25" height="25" viewBox="0 0 25 25"><path d="M5 8V1h12l7 7v16H5v-5" fill="none" stroke="#dcdcdc" stroke-width="2"/><path d="M16 1v8h8" fill="none" stroke="#dcdcdc" stroke-width="1.6"/><path d="M0 14h12M8 10l4.5 4-4.5 4" fill="none" stroke="#6cc24a" stroke-width="2"/></svg><svg style="left:1363px;top:122px;" width="25" height="19" viewBox="0 0 25 19"><rect x="1" y="1" width="23" height="17" rx="1.5" fill="none" stroke="#dcdcdc" stroke-width="2"/><path d="M1.5 2l11 9 11-9M1.5 17l8-7M23.5 17l-8-7" fill="none" stroke="#dcdcdc" stroke-width="1.8"/></svg><svg style="left:1434px;top:116px;" width="24" height="28" viewBox="0 0 24 28"><path d="M2 4h20v23H2z" fill="none" stroke="#8a5a32" stroke-width="3"/><rect x="7" y="0" width="10" height="5" rx="1" fill="#6e6e6e"/><text x="8" y="19" font-size="10" font-family="Liberation Sans" fill="#7a7a7a">?</text></svg><svg style="left:1492px;top:118px;" width="33" height="27" viewBox="0 0 33 27"><rect x="1" y="1" width="25" height="9" fill="none" stroke="#3b5478" stroke-width="2"/><rect x="1" y="14" width="19" height="9" fill="none" stroke="#3b5478" stroke-width="2"/><path d="M20 10l0 16 4-4 3 5 2-1-3-5h6z" fill="#6e6e6e"/></svg><svg style="left:1544px;top:116px;" width="25" height="28" viewBox="0 0 25 28"><path d="M1 1h16l7 7v19H1z" fill="none" stroke="#e8e8e8" stroke-width="2"/><path d="M16 1v8h8" fill="#e8e8e8"/><path d="M4 10l5-5M4 16l11-11M4 22l17-17M7 25l14-14M13 25l8-8" stroke="#4e86d6" stroke-width="2"/></svg><div class="a" style="left:387px;top:205px;width:300px;height:727px;border:1px solid #3f3f46;background:#2d2d30"></div><div class="t" style="left:393px;top:211px;font-size:11.7px;color:#d8d8d8">Gezinti</div><svg style="left:436px;top:214px;" width="211" height="6" viewBox="0 0 211 6"><defs><pattern id="ng" width="4" height="4" patternUnits="userSpaceOnUse"><rect x="0" y="0" width="1" height="1" fill="#58585c"/><rect x="2" y="2" width="1" height="1" fill="#58585c"/></pattern></defs><rect width="211" height="6" fill="url(#ng)"/></svg><svg style="left:654px;top:211px;" width="8" height="11" viewBox="0 0 8 11"><path d="M1.5 0.6h5M2.2 0.6v5.4M5.8 0.6v5.4M0.5 6h7M4 6v5" stroke="#f0f0f0" stroke-width="1.2"/></svg><svg style="left:670px;top:212px;" width="9" height="9" viewBox="0 0 9 9"><path d="M0.5 0.5l8 8M8.5 0.5l-8 8" stroke="#f0f0f0" stroke-width="1.3"/></svg><div class="a" style="left:400px;top:240px;width:274px;height:22px;background:#333337;border:1px solid #3f3f46"></div><div class="t" style="left:405px;top:244px;font-size:11.5px;color:#e0e0e0">aramak için metni girin</div><svg style="left:644px;top:247px;" width="9" height="9" viewBox="0 0 9 9"><path d="M0.5 0.5l8 8M8.5 0.5l-8 8" stroke="#e0e0e0" stroke-width="1.3"/></svg><svg style="left:661px;top:250px;" width="7" height="4" viewBox="0 0 7 4"><path d="M0 0h7L3.5 4z" fill="#e0e0e0"/></svg><div class="t" style="left:400px;top:271px;font-size:12px;color:#0f82dc;font-weight:bold">Doküman Haritası</div><div class="a" style="left:400px;top:288px;width:106px;height:3px;background:#0a7fd8"></div><div class="a" style="left:509px;top:266px;width:1px;height:24px;background:#3a3a3e"></div><div class="t" style="left:516px;top:271px;font-size:11.5px;color:#f0f0f0">Sayfalar</div><div class="a" style="left:568px;top:266px;width:1px;height:24px;background:#3a3a3e"></div><div class="t" style="left:575px;top:271px;font-size:11.5px;color:#f0f0f0">Arama sonuçları</div><div class="a" style="left:404px;top:300px;width:266px;height:20px;background:#0078d4"></div><svg style="left:411px;top:306px;" width="6" height="6" viewBox="0 0 6 6"><path d="M6 0v6H0z" fill="#fff"/></svg><div class="t" style="left:428px;top:303px;font-size:11.5px;color:#fff">Rapor</div><div class="t" style="left:448px;top:323px;font-size:12px;color:#f0f0f0;transform:scaleX(0.883);transform-origin:0 0">GÖRELİ ÖTELEME (4.9.1.3)</div><div class="a" style="left:812px;top:205px;width:794px;height:727px;background:#fff;border-left:1px solid #1c8ae0;border-right:1px solid #1c8ae0"></div><div class="a" style="left:870px;top:210px;width:1px;height:722px;border-left:1px dashed #c8c8c8"></div><div class="a" style="left:1567px;top:210px;width:1px;height:722px;border-left:1px dashed #c8c8c8"></div><div class="t" style="left:872px;top:224px;font-family:Liberation Serif;font-size:13px;font-weight:bold;color:#000;line-height:16px">X Yönü</div><div class="a" style="left:870px;top:246px;width:697px;height:23px;background:#d3d3d3"></div><div class="t" style="left:871px;top:252px;font-family:Liberation Serif;font-size:12px;font-weight:bold;color:#000">Eleman İsmi</div><div class="t" style="left:1009px;top:252px;font-family:Liberation Serif;font-size:12px;font-weight:bold;color:#000">Kat</div><div class="t" style="left:1102px;top:252px;font-family:Liberation Serif;font-size:12px;font-weight:bold;color:#000">hi [m]</div><div class="t" style="left:1195px;top:252px;font-family:Liberation Serif;font-size:12px;font-weight:bold;color:#000">Δi [m]</div><div class="t" style="left:1288px;top:252px;font-family:Liberation Serif;font-size:12px;font-weight:bold;color:#000">δi [m]</div><div class="t" style="left:1381px;top:252px;font-family:Liberation Serif;font-size:12px;font-weight:bold;color:#000">Üst Sınır</div><div class="t" style="left:1474px;top:252px;font-family:Liberation Serif;font-size:12px;font-weight:bold;color:#000">λ.δi/hi</div><div class="a" style="left:870px;top:269px;width:697px;height:24px;background:#fff"></div><div class="t" style="left:871px;top:275px;font-family:Liberation Serif;font-size:12px;color:#000">S24_34(HE360A)</div><div class="t" style="left:1015px;top:275px;font-family:Liberation Serif;font-size:12px;color:#000">17,21</div><div class="t" style="left:1102px;top:275px;font-family:Liberation Serif;font-size:12px;color:#000">17,06</div><div class="t" style="left:1195px;top:275px;font-family:Liberation Serif;font-size:12px;color:#000">0,015</div><div class="t" style="left:1288px;top:275px;font-family:Liberation Serif;font-size:12px;color:#000">0,058</div><div class="t" style="left:1381px;top:275px;font-family:Liberation Serif;font-size:12px;color:#000">0,008</div><svg style="left:1475px;top:277px;" width="10" height="9" viewBox="0 0 10 9"><path d="M0.8 4.5l3 3L9.2 1" fill="none" stroke="#1a9a3a" stroke-width="1.6"/></svg><div class="t" style="left:1485px;top:275px;font-family:Liberation Serif;font-size:12px;color:#000">0,001</div><div class="a" style="left:870px;top:293px;width:697px;height:24px;background:#f3f3f3"></div><div class="t" style="left:871px;top:299px;font-family:Liberation Serif;font-size:12px;color:#000">S24_58(HE360A)</div><div class="t" style="left:1015px;top:299px;font-family:Liberation Serif;font-size:12px;color:#000">17,21</div><div class="t" style="left:1102px;top:299px;font-family:Liberation Serif;font-size:12px;color:#000">17,18</div><div class="t" style="left:1195px;top:299px;font-family:Liberation Serif;font-size:12px;color:#000">0,015</div><div class="t" style="left:1288px;top:299px;font-family:Liberation Serif;font-size:12px;color:#000">0,058</div><div class="t" style="left:1381px;top:299px;font-family:Liberation Serif;font-size:12px;color:#000">0,008</div><svg style="left:1475px;top:301px;" width="10" height="9" viewBox="0 0 10 9"><path d="M0.8 4.5l3 3L9.2 1" fill="none" stroke="#1a9a3a" stroke-width="1.6"/></svg><div class="t" style="left:1485px;top:299px;font-family:Liberation Serif;font-size:12px;color:#000">0,001</div><div class="a" style="left:870px;top:317px;width:697px;height:24px;background:#fff"></div><div class="t" style="left:871px;top:323px;font-family:Liberation Serif;font-size:12px;color:#000">S23_278(HE360A)</div><div class="t" style="left:1015px;top:323px;font-family:Liberation Serif;font-size:12px;color:#000">17,21</div><div class="t" style="left:1102px;top:323px;font-family:Liberation Serif;font-size:12px;color:#000">17,06</div><div class="t" style="left:1195px;top:323px;font-family:Liberation Serif;font-size:12px;color:#000">0,014</div><div class="t" style="left:1288px;top:323px;font-family:Liberation Serif;font-size:12px;color:#000">0,055</div><div class="t" style="left:1381px;top:323px;font-family:Liberation Serif;font-size:12px;color:#000">0,008</div><svg style="left:1475px;top:325px;" width="10" height="9" viewBox="0 0 10 9"><path d="M0.8 4.5l3 3L9.2 1" fill="none" stroke="#1a9a3a" stroke-width="1.6"/></svg><div class="t" style="left:1485px;top:323px;font-family:Liberation Serif;font-size:12px;color:#000">0,001</div><div class="a" style="left:870px;top:341px;width:697px;height:24px;background:#f3f3f3"></div><div class="t" style="left:871px;top:347px;font-family:Liberation Serif;font-size:12px;color:#000">S17_44(HE360A)</div><div class="t" style="left:1015px;top:347px;font-family:Liberation Serif;font-size:12px;color:#000">17,21</div><div class="t" style="left:1102px;top:347px;font-family:Liberation Serif;font-size:12px;color:#000">17,74</div><div class="t" style="left:1195px;top:347px;font-family:Liberation Serif;font-size:12px;color:#000">0,014</div><div class="t" style="left:1288px;top:347px;font-family:Liberation Serif;font-size:12px;color:#000">0,058</div><div class="t" style="left:1381px;top:347px;font-family:Liberation Serif;font-size:12px;color:#000">0,008</div><svg style="left:1475px;top:349px;" width="10" height="9" viewBox="0 0 10 9"><path d="M0.8 4.5l3 3L9.2 1" fill="none" stroke="#1a9a3a" stroke-width="1.6"/></svg><div class="t" style="left:1485px;top:347px;font-family:Liberation Serif;font-size:12px;color:#000">0,001</div><div class="a" style="left:870px;top:365px;width:697px;height:24px;background:#fff"></div><div class="t" style="left:871px;top:371px;font-family:Liberation Serif;font-size:12px;color:#000">S14_39(HE360A)</div><div class="t" style="left:1015px;top:371px;font-family:Liberation Serif;font-size:12px;color:#000">17,21</div><div class="t" style="left:1102px;top:371px;font-family:Liberation Serif;font-size:12px;color:#000">17,74</div><div class="t" style="left:1195px;top:371px;font-family:Liberation Serif;font-size:12px;color:#000">0,014</div><div class="t" style="left:1288px;top:371px;font-family:Liberation Serif;font-size:12px;color:#000">0,058</div><div class="t" style="left:1381px;top:371px;font-family:Liberation Serif;font-size:12px;color:#000">0,008</div><svg style="left:1475px;top:373px;" width="10" height="9" viewBox="0 0 10 9"><path d="M0.8 4.5l3 3L9.2 1" fill="none" stroke="#1a9a3a" stroke-width="1.6"/></svg><div class="t" style="left:1485px;top:371px;font-family:Liberation Serif;font-size:12px;color:#000">0,001</div><div class="a" style="left:870px;top:389px;width:697px;height:24px;background:#f3f3f3"></div><div class="t" style="left:871px;top:395px;font-family:Liberation Serif;font-size:12px;color:#000">S14_38(HE360A)</div><div class="t" style="left:1015px;top:395px;font-family:Liberation Serif;font-size:12px;color:#000">17,21</div><div class="t" style="left:1102px;top:395px;font-family:Liberation Serif;font-size:12px;color:#000">17,74</div><div class="t" style="left:1195px;top:395px;font-family:Liberation Serif;font-size:12px;color:#000">0,014</div><div class="t" style="left:1288px;top:395px;font-family:Liberation Serif;font-size:12px;color:#000">0,057</div><div class="t" style="left:1381px;top:395px;font-family:Liberation Serif;font-size:12px;color:#000">0,008</div><svg style="left:1475px;top:397px;" width="10" height="9" viewBox="0 0 10 9"><path d="M0.8 4.5l3 3L9.2 1" fill="none" stroke="#1a9a3a" stroke-width="1.6"/></svg><div class="t" style="left:1485px;top:395px;font-family:Liberation Serif;font-size:12px;color:#000">0,001</div><div class="a" style="left:870px;top:413px;width:697px;height:24px;background:#fff"></div><div class="t" style="left:871px;top:419px;font-family:Liberation Serif;font-size:12px;color:#000">S14_37(HE360A)</div><div class="t" style="left:1015px;top:419px;font-family:Liberation Serif;font-size:12px;color:#000">17,21</div><div class="t" style="left:1102px;top:419px;font-family:Liberation Serif;font-size:12px;color:#000">17,74</div><div class="t" style="left:1195px;top:419px;font-family:Liberation Serif;font-size:12px;color:#000">0,014</div><div class="t" style="left:1288px;top:419px;font-family:Liberation Serif;font-size:12px;color:#000">0,057</div><div class="t" style="left:1381px;top:419px;font-family:Liberation Serif;font-size:12px;color:#000">0,008</div><svg style="left:1475px;top:421px;" width="10" height="9" viewBox="0 0 10 9"><path d="M0.8 4.5l3 3L9.2 1" fill="none" stroke="#1a9a3a" stroke-width="1.6"/></svg><div class="t" style="left:1485px;top:419px;font-family:Liberation Serif;font-size:12px;color:#000">0,001</div><div class="a" style="left:870px;top:437px;width:697px;height:24px;background:#f3f3f3"></div><div class="t" style="left:871px;top:443px;font-family:Liberation Serif;font-size:12px;color:#000">S14_43(HE360A)</div><div class="t" style="left:1015px;top:443px;font-family:Liberation Serif;font-size:12px;color:#000">17,21</div><div class="t" style="left:1102px;top:443px;font-family:Liberation Serif;font-size:12px;color:#000">17,74</div><div class="t" style="left:1195px;top:443px;font-family:Liberation Serif;font-size:12px;color:#000">0,014</div><div class="t" style="left:1288px;top:443px;font-family:Liberation Serif;font-size:12px;color:#000">0,057</div><div class="t" style="left:1381px;top:443px;font-family:Liberation Serif;font-size:12px;color:#000">0,008</div><svg style="left:1475px;top:445px;" width="10" height="9" viewBox="0 0 10 9"><path d="M0.8 4.5l3 3L9.2 1" fill="none" stroke="#1a9a3a" stroke-width="1.6"/></svg><div class="t" style="left:1485px;top:443px;font-family:Liberation Serif;font-size:12px;color:#000">0,001</div><div class="a" style="left:870px;top:461px;width:697px;height:24px;background:#fff"></div><div class="t" style="left:871px;top:467px;font-family:Liberation Serif;font-size:12px;color:#000">S14_41(HE360A)</div><div class="t" style="left:1015px;top:467px;font-family:Liberation Serif;font-size:12px;color:#000">17,21</div><div class="t" style="left:1102px;top:467px;font-family:Liberation Serif;font-size:12px;color:#000">17,74</div><div class="t" style="left:1195px;top:467px;font-family:Liberation Serif;font-size:12px;color:#000">0,014</div><div class="t" style="left:1288px;top:467px;font-family:Liberation Serif;font-size:12px;color:#000">0,057</div><div class="t" style="left:1381px;top:467px;font-family:Liberation Serif;font-size:12px;color:#000">0,008</div><svg style="left:1475px;top:469px;" width="10" height="9" viewBox="0 0 10 9"><path d="M0.8 4.5l3 3L9.2 1" fill="none" stroke="#1a9a3a" stroke-width="1.6"/></svg><div class="t" style="left:1485px;top:467px;font-family:Liberation Serif;font-size:12px;color:#000">0,001</div><div class="a" style="left:870px;top:485px;width:697px;height:24px;background:#f3f3f3"></div><div class="t" style="left:871px;top:491px;font-family:Liberation Serif;font-size:12px;color:#000">S14_42(HE360A)</div><div class="t" style="left:1015px;top:491px;font-family:Liberation Serif;font-size:12px;color:#000">17,21</div><div class="t" style="left:1102px;top:491px;font-family:Liberation Serif;font-size:12px;color:#000">17,74</div><div class="t" style="left:1195px;top:491px;font-family:Liberation Serif;font-size:12px;color:#000">0,014</div><div class="t" style="left:1288px;top:491px;font-family:Liberation Serif;font-size:12px;color:#000">0,057</div><div class="t" style="left:1381px;top:491px;font-family:Liberation Serif;font-size:12px;color:#000">0,008</div><svg style="left:1475px;top:493px;" width="10" height="9" viewBox="0 0 10 9"><path d="M0.8 4.5l3 3L9.2 1" fill="none" stroke="#1a9a3a" stroke-width="1.6"/></svg><div class="t" style="left:1485px;top:491px;font-family:Liberation Serif;font-size:12px;color:#000">0,001</div><div class="a" style="left:870px;top:509px;width:697px;height:24px;background:#fff"></div><div class="t" style="left:871px;top:515px;font-family:Liberation Serif;font-size:12px;color:#000">S14_40(HE360A)</div><div class="t" style="left:1015px;top:515px;font-family:Liberation Serif;font-size:12px;color:#000">17,21</div><div class="t" style="left:1102px;top:515px;font-family:Liberation Serif;font-size:12px;color:#000">17,74</div><div class="t" style="left:1195px;top:515px;font-family:Liberation Serif;font-size:12px;color:#000">0,014</div><div class="t" style="left:1288px;top:515px;font-family:Liberation Serif;font-size:12px;color:#000">0,057</div><div class="t" style="left:1381px;top:515px;font-family:Liberation Serif;font-size:12px;color:#000">0,008</div><svg style="left:1475px;top:517px;" width="10" height="9" viewBox="0 0 10 9"><path d="M0.8 4.5l3 3L9.2 1" fill="none" stroke="#1a9a3a" stroke-width="1.6"/></svg><div class="t" style="left:1485px;top:515px;font-family:Liberation Serif;font-size:12px;color:#000">0,001</div><div class="a" style="left:870px;top:533px;width:697px;height:24px;background:#f3f3f3"></div><div class="t" style="left:871px;top:539px;font-family:Liberation Serif;font-size:12px;color:#000">S14_36(HE360A)</div><div class="t" style="left:1015px;top:539px;font-family:Liberation Serif;font-size:12px;color:#000">17,21</div><div class="t" style="left:1102px;top:539px;font-family:Liberation Serif;font-size:12px;color:#000">17,74</div><div class="t" style="left:1195px;top:539px;font-family:Liberation Serif;font-size:12px;color:#000">0,014</div><div class="t" style="left:1288px;top:539px;font-family:Liberation Serif;font-size:12px;color:#000">0,057</div><div class="t" style="left:1381px;top:539px;font-family:Liberation Serif;font-size:12px;color:#000">0,008</div><svg style="left:1475px;top:541px;" width="10" height="9" viewBox="0 0 10 9"><path d="M0.8 4.5l3 3L9.2 1" fill="none" stroke="#1a9a3a" stroke-width="1.6"/></svg><div class="t" style="left:1485px;top:539px;font-family:Liberation Serif;font-size:12px;color:#000">0,001</div><div class="a" style="left:870px;top:557px;width:697px;height:24px;background:#fff"></div><div class="t" style="left:871px;top:563px;font-family:Liberation Serif;font-size:12px;color:#000">S23_268(HE360A)</div><div class="t" style="left:1015px;top:563px;font-family:Liberation Serif;font-size:12px;color:#000">17,21</div><div class="t" style="left:1102px;top:563px;font-family:Liberation Serif;font-size:12px;color:#000">17,18</div><div class="t" style="left:1195px;top:563px;font-family:Liberation Serif;font-size:12px;color:#000">0,013</div><div class="t" style="left:1288px;top:563px;font-family:Liberation Serif;font-size:12px;color:#000">0,053</div><div class="t" style="left:1381px;top:563px;font-family:Liberation Serif;font-size:12px;color:#000">0,008</div><svg style="left:1475px;top:565px;" width="10" height="9" viewBox="0 0 10 9"><path d="M0.8 4.5l3 3L9.2 1" fill="none" stroke="#1a9a3a" stroke-width="1.6"/></svg><div class="t" style="left:1485px;top:563px;font-family:Liberation Serif;font-size:12px;color:#000">0,001</div><div class="a" style="left:870px;top:581px;width:697px;height:24px;background:#f3f3f3"></div><div class="t" style="left:871px;top:587px;font-family:Liberation Serif;font-size:12px;color:#000">S20_275(HE360A)</div><div class="t" style="left:1015px;top:587px;font-family:Liberation Serif;font-size:12px;color:#000">17,21</div><div class="t" style="left:1102px;top:587px;font-family:Liberation Serif;font-size:12px;color:#000">17,06</div><div class="t" style="left:1195px;top:587px;font-family:Liberation Serif;font-size:12px;color:#000">0,012</div><div class="t" style="left:1288px;top:587px;font-family:Liberation Serif;font-size:12px;color:#000">0,048</div><div class="t" style="left:1381px;top:587px;font-family:Liberation Serif;font-size:12px;color:#000">0,008</div><svg style="left:1475px;top:589px;" width="10" height="9" viewBox="0 0 10 9"><path d="M0.8 4.5l3 3L9.2 1" fill="none" stroke="#1a9a3a" stroke-width="1.6"/></svg><div class="t" style="left:1485px;top:587px;font-family:Liberation Serif;font-size:12px;color:#000">0,001</div><div class="a" style="left:870px;top:605px;width:697px;height:24px;background:#fff"></div><div class="t" style="left:871px;top:611px;font-family:Liberation Serif;font-size:12px;color:#000">S25_12(HE360A)</div><div class="t" style="left:1015px;top:611px;font-family:Liberation Serif;font-size:12px;color:#000">17,21</div><div class="t" style="left:1102px;top:611px;font-family:Liberation Serif;font-size:12px;color:#000">17,06</div><div class="t" style="left:1195px;top:611px;font-family:Liberation Serif;font-size:12px;color:#000">0,012</div><div class="t" style="left:1288px;top:611px;font-family:Liberation Serif;font-size:12px;color:#000">0,048</div><div class="t" style="left:1381px;top:611px;font-family:Liberation Serif;font-size:12px;color:#000">0,008</div><svg style="left:1475px;top:613px;" width="10" height="9" viewBox="0 0 10 9"><path d="M0.8 4.5l3 3L9.2 1" fill="none" stroke="#1a9a3a" stroke-width="1.6"/></svg><div class="t" style="left:1485px;top:611px;font-family:Liberation Serif;font-size:12px;color:#000">0,001</div><div class="a" style="left:870px;top:629px;width:697px;height:24px;background:#f3f3f3"></div><div class="t" style="left:871px;top:635px;font-family:Liberation Serif;font-size:12px;color:#000">S25_60(HE360A)</div><div class="t" style="left:1015px;top:635px;font-family:Liberation Serif;font-size:12px;color:#000">17,21</div><div class="t" style="left:1102px;top:635px;font-family:Liberation Serif;font-size:12px;color:#000">17,18</div><div class="t" style="left:1195px;top:635px;font-family:Liberation Serif;font-size:12px;color:#000">0,012</div><div class="t" style="left:1288px;top:635px;font-family:Liberation Serif;font-size:12px;color:#000">0,048</div><div class="t" style="left:1381px;top:635px;font-family:Liberation Serif;font-size:12px;color:#000">0,008</div><svg style="left:1475px;top:637px;" width="10" height="9" viewBox="0 0 10 9"><path d="M0.8 4.5l3 3L9.2 1" fill="none" stroke="#1a9a3a" stroke-width="1.6"/></svg><div class="t" style="left:1485px;top:635px;font-family:Liberation Serif;font-size:12px;color:#000">0,001</div><div class="a" style="left:870px;top:653px;width:697px;height:24px;background:#fff"></div><div class="t" style="left:871px;top:659px;font-family:Liberation Serif;font-size:12px;color:#000">S20_267(HE360A)</div><div class="t" style="left:1015px;top:659px;font-family:Liberation Serif;font-size:12px;color:#000">17,21</div><div class="t" style="left:1102px;top:659px;font-family:Liberation Serif;font-size:12px;color:#000">17,18</div><div class="t" style="left:1195px;top:659px;font-family:Liberation Serif;font-size:12px;color:#000">0,012</div><div class="t" style="left:1288px;top:659px;font-family:Liberation Serif;font-size:12px;color:#000">0,048</div><div class="t" style="left:1381px;top:659px;font-family:Liberation Serif;font-size:12px;color:#000">0,008</div><svg style="left:1475px;top:661px;" width="10" height="9" viewBox="0 0 10 9"><path d="M0.8 4.5l3 3L9.2 1" fill="none" stroke="#1a9a3a" stroke-width="1.6"/></svg><div class="t" style="left:1485px;top:659px;font-family:Liberation Serif;font-size:12px;color:#000">0,001</div><div class="a" style="left:870px;top:677px;width:697px;height:24px;background:#f3f3f3"></div><div class="t" style="left:871px;top:683px;font-family:Liberation Serif;font-size:12px;color:#000">S22_277(HE360A)</div><div class="t" style="left:1015px;top:683px;font-family:Liberation Serif;font-size:12px;color:#000">17,21</div><div class="t" style="left:1102px;top:683px;font-family:Liberation Serif;font-size:12px;color:#000">17,06</div><div class="t" style="left:1195px;top:683px;font-family:Liberation Serif;font-size:12px;color:#000">0,012</div><div class="t" style="left:1288px;top:683px;font-family:Liberation Serif;font-size:12px;color:#000">0,046</div><div class="t" style="left:1381px;top:683px;font-family:Liberation Serif;font-size:12px;color:#000">0,008</div><svg style="left:1475px;top:685px;" width="10" height="9" viewBox="0 0 10 9"><path d="M0.8 4.5l3 3L9.2 1" fill="none" stroke="#1a9a3a" stroke-width="1.6"/></svg><div class="t" style="left:1485px;top:683px;font-family:Liberation Serif;font-size:12px;color:#000">0,001</div><div class="a" style="left:870px;top:701px;width:697px;height:24px;background:#fff"></div><div class="t" style="left:871px;top:707px;font-family:Liberation Serif;font-size:12px;color:#000">S16_17(HE360A)</div><div class="t" style="left:1015px;top:707px;font-family:Liberation Serif;font-size:12px;color:#000">17,21</div><div class="t" style="left:1102px;top:707px;font-family:Liberation Serif;font-size:12px;color:#000">17,74</div><div class="t" style="left:1195px;top:707px;font-family:Liberation Serif;font-size:12px;color:#000">0,012</div><div class="t" style="left:1288px;top:707px;font-family:Liberation Serif;font-size:12px;color:#000">0,048</div><div class="t" style="left:1381px;top:707px;font-family:Liberation Serif;font-size:12px;color:#000">0,008</div><svg style="left:1475px;top:709px;" width="10" height="9" viewBox="0 0 10 9"><path d="M0.8 4.5l3 3L9.2 1" fill="none" stroke="#1a9a3a" stroke-width="1.6"/></svg><div class="t" style="left:1485px;top:707px;font-family:Liberation Serif;font-size:12px;color:#000">0,001</div><div class="a" style="left:870px;top:725px;width:697px;height:24px;background:#f3f3f3"></div><div class="t" style="left:871px;top:731px;font-family:Liberation Serif;font-size:12px;color:#000">S12_14(HE360A)</div><div class="t" style="left:1015px;top:731px;font-family:Liberation Serif;font-size:12px;color:#000">17,21</div><div class="t" style="left:1102px;top:731px;font-family:Liberation Serif;font-size:12px;color:#000">17,74</div><div class="t" style="left:1195px;top:731px;font-family:Liberation Serif;font-size:12px;color:#000">0,012</div><div class="t" style="left:1288px;top:731px;font-family:Liberation Serif;font-size:12px;color:#000">0,048</div><div class="t" style="left:1381px;top:731px;font-family:Liberation Serif;font-size:12px;color:#000">0,008</div><svg style="left:1475px;top:733px;" width="10" height="9" viewBox="0 0 10 9"><path d="M0.8 4.5l3 3L9.2 1" fill="none" stroke="#1a9a3a" stroke-width="1.6"/></svg><div class="t" style="left:1485px;top:731px;font-family:Liberation Serif;font-size:12px;color:#000">0,001</div><div class="a" style="left:870px;top:749px;width:697px;height:24px;background:#fff"></div><div class="t" style="left:871px;top:755px;font-family:Liberation Serif;font-size:12px;color:#000">S12_20(HE360A)</div><div class="t" style="left:1015px;top:755px;font-family:Liberation Serif;font-size:12px;color:#000">17,21</div><div class="t" style="left:1102px;top:755px;font-family:Liberation Serif;font-size:12px;color:#000">17,74</div><div class="t" style="left:1195px;top:755px;font-family:Liberation Serif;font-size:12px;color:#000">0,012</div><div class="t" style="left:1288px;top:755px;font-family:Liberation Serif;font-size:12px;color:#000">0,048</div><div class="t" style="left:1381px;top:755px;font-family:Liberation Serif;font-size:12px;color:#000">0,008</div><svg style="left:1475px;top:757px;" width="10" height="9" viewBox="0 0 10 9"><path d="M0.8 4.5l3 3L9.2 1" fill="none" stroke="#1a9a3a" stroke-width="1.6"/></svg><div class="t" style="left:1485px;top:755px;font-family:Liberation Serif;font-size:12px;color:#000">0,001</div><div class="a" style="left:870px;top:773px;width:697px;height:24px;background:#f3f3f3"></div><div class="t" style="left:871px;top:779px;font-family:Liberation Serif;font-size:12px;color:#000">S12_16(HE360A)</div><div class="t" style="left:1015px;top:779px;font-family:Liberation Serif;font-size:12px;color:#000">17,21</div><div class="t" style="left:1102px;top:779px;font-family:Liberation Serif;font-size:12px;color:#000">17,74</div><div class="t" style="left:1195px;top:779px;font-family:Liberation Serif;font-size:12px;color:#000">0,012</div><div class="t" style="left:1288px;top:779px;font-family:Liberation Serif;font-size:12px;color:#000">0,048</div><div class="t" style="left:1381px;top:779px;font-family:Liberation Serif;font-size:12px;color:#000">0,008</div><svg style="left:1475px;top:781px;" width="10" height="9" viewBox="0 0 10 9"><path d="M0.8 4.5l3 3L9.2 1" fill="none" stroke="#1a9a3a" stroke-width="1.6"/></svg><div class="t" style="left:1485px;top:779px;font-family:Liberation Serif;font-size:12px;color:#000">0,001</div><div class="a" style="left:870px;top:797px;width:697px;height:24px;background:#fff"></div><div class="t" style="left:871px;top:803px;font-family:Liberation Serif;font-size:12px;color:#000">S12_18(HE360A)</div><div class="t" style="left:1015px;top:803px;font-family:Liberation Serif;font-size:12px;color:#000">17,21</div><div class="t" style="left:1102px;top:803px;font-family:Liberation Serif;font-size:12px;color:#000">17,74</div><div class="t" style="left:1195px;top:803px;font-family:Liberation Serif;font-size:12px;color:#000">0,012</div><div class="t" style="left:1288px;top:803px;font-family:Liberation Serif;font-size:12px;color:#000">0,048</div><div class="t" style="left:1381px;top:803px;font-family:Liberation Serif;font-size:12px;color:#000">0,008</div><svg style="left:1475px;top:805px;" width="10" height="9" viewBox="0 0 10 9"><path d="M0.8 4.5l3 3L9.2 1" fill="none" stroke="#1a9a3a" stroke-width="1.6"/></svg><div class="t" style="left:1485px;top:803px;font-family:Liberation Serif;font-size:12px;color:#000">0,001</div><div class="a" style="left:870px;top:821px;width:697px;height:24px;background:#f3f3f3"></div><div class="t" style="left:871px;top:827px;font-family:Liberation Serif;font-size:12px;color:#000">S12_15(HE360A)</div><div class="t" style="left:1015px;top:827px;font-family:Liberation Serif;font-size:12px;color:#000">17,21</div><div class="t" style="left:1102px;top:827px;font-family:Liberation Serif;font-size:12px;color:#000">17,74</div><div class="t" style="left:1195px;top:827px;font-family:Liberation Serif;font-size:12px;color:#000">0,012</div><div class="t" style="left:1288px;top:827px;font-family:Liberation Serif;font-size:12px;color:#000">0,048</div><div class="t" style="left:1381px;top:827px;font-family:Liberation Serif;font-size:12px;color:#000">0,008</div><svg style="left:1475px;top:829px;" width="10" height="9" viewBox="0 0 10 9"><path d="M0.8 4.5l3 3L9.2 1" fill="none" stroke="#1a9a3a" stroke-width="1.6"/></svg><div class="t" style="left:1485px;top:827px;font-family:Liberation Serif;font-size:12px;color:#000">0,001</div><div class="a" style="left:870px;top:845px;width:697px;height:24px;background:#fff"></div><div class="t" style="left:871px;top:851px;font-family:Liberation Serif;font-size:12px;color:#000">S12_19(HE360A)</div><div class="t" style="left:1015px;top:851px;font-family:Liberation Serif;font-size:12px;color:#000">17,21</div><div class="t" style="left:1102px;top:851px;font-family:Liberation Serif;font-size:12px;color:#000">17,74</div><div class="t" style="left:1195px;top:851px;font-family:Liberation Serif;font-size:12px;color:#000">0,012</div><div class="t" style="left:1288px;top:851px;font-family:Liberation Serif;font-size:12px;color:#000">0,048</div><div class="t" style="left:1381px;top:851px;font-family:Liberation Serif;font-size:12px;color:#000">0,008</div><svg style="left:1475px;top:853px;" width="10" height="9" viewBox="0 0 10 9"><path d="M0.8 4.5l3 3L9.2 1" fill="none" stroke="#1a9a3a" stroke-width="1.6"/></svg><div class="t" style="left:1485px;top:851px;font-family:Liberation Serif;font-size:12px;color:#000">0,001</div><div class="a" style="left:870px;top:869px;width:697px;height:24px;background:#f3f3f3"></div><div class="t" style="left:871px;top:875px;font-family:Liberation Serif;font-size:12px;color:#000">S12_13(HE360A)</div><div class="t" style="left:1015px;top:875px;font-family:Liberation Serif;font-size:12px;color:#000">17,21</div><div class="t" style="left:1102px;top:875px;font-family:Liberation Serif;font-size:12px;color:#000">17,74</div><div class="t" style="left:1195px;top:875px;font-family:Liberation Serif;font-size:12px;color:#000">0,012</div><div class="t" style="left:1288px;top:875px;font-family:Liberation Serif;font-size:12px;color:#000">0,047</div><div class="t" style="left:1381px;top:875px;font-family:Liberation Serif;font-size:12px;color:#000">0,008</div><svg style="left:1475px;top:877px;" width="10" height="9" viewBox="0 0 10 9"><path d="M0.8 4.5l3 3L9.2 1" fill="none" stroke="#1a9a3a" stroke-width="1.6"/></svg><div class="t" style="left:1485px;top:875px;font-family:Liberation Serif;font-size:12px;color:#000">0,001</div><div class="a" style="left:870px;top:893px;width:697px;height:24px;background:#fff"></div><div class="t" style="left:871px;top:899px;font-family:Liberation Serif;font-size:12px;color:#000">S12_21(HE360A)</div><div class="t" style="left:1015px;top:899px;font-family:Liberation Serif;font-size:12px;color:#000">17,21</div><div class="t" style="left:1102px;top:899px;font-family:Liberation Serif;font-size:12px;color:#000">17,74</div><div class="t" style="left:1195px;top:899px;font-family:Liberation Serif;font-size:12px;color:#000">0,012</div><div class="t" style="left:1288px;top:899px;font-family:Liberation Serif;font-size:12px;color:#000">0,047</div><div class="t" style="left:1381px;top:899px;font-family:Liberation Serif;font-size:12px;color:#000">0,008</div><svg style="left:1475px;top:901px;" width="10" height="9" viewBox="0 0 10 9"><path d="M0.8 4.5l3 3L9.2 1" fill="none" stroke="#1a9a3a" stroke-width="1.6"/></svg><div class="t" style="left:1485px;top:899px;font-family:Liberation Serif;font-size:12px;color:#000">0,001</div><div class="a" style="left:870px;top:246px;width:1px;height:671px;background:#a8a8a8"></div><div class="a" style="left:1008px;top:246px;width:1px;height:671px;background:#a8a8a8"></div><div class="a" style="left:1101px;top:246px;width:1px;height:671px;background:#a8a8a8"></div><div class="a" style="left:1194px;top:246px;width:1px;height:671px;background:#a8a8a8"></div><div class="a" style="left:1287px;top:246px;width:1px;height:671px;background:#a8a8a8"></div><div class="a" style="left:1380px;top:246px;width:1px;height:671px;background:#a8a8a8"></div><div class="a" style="left:1473px;top:246px;width:1px;height:671px;background:#a8a8a8"></div><div class="a" style="left:1567px;top:246px;width:1px;height:671px;background:#a8a8a8"></div><div class="a" style="left:870px;top:246px;width:698px;height:1px;background:#a8a8a8"></div><div class="a" style="left:870px;top:269px;width:698px;height:1px;background:#a8a8a8"></div><div class="a" style="left:870px;top:293px;width:698px;height:1px;background:#a8a8a8"></div><div class="a" style="left:870px;top:317px;width:698px;height:1px;background:#a8a8a8"></div><div class="a" style="left:870px;top:341px;width:698px;height:1px;background:#a8a8a8"></div><div class="a" style="left:870px;top:365px;width:698px;height:1px;background:#a8a8a8"></div><div class="a" style="left:870px;top:389px;width:698px;height:1px;background:#a8a8a8"></div><div class="a" style="left:870px;top:413px;width:698px;height:1px;background:#a8a8a8"></div><div class="a" style="left:870px;top:437px;width:698px;height:1px;background:#a8a8a8"></div><div class="a" style="left:870px;top:461px;width:698px;height:1px;background:#a8a8a8"></div><div class="a" style="left:870px;top:485px;width:698px;height:1px;background:#a8a8a8"></div><div class="a" style="left:870px;top:509px;width:698px;height:1px;background:#a8a8a8"></div><div class="a" style="left:870px;top:533px;width:698px;height:1px;background:#a8a8a8"></div><div class="a" style="left:870px;top:557px;width:698px;height:1px;background:#a8a8a8"></div><div class="a" style="left:870px;top:581px;width:698px;height:1px;background:#a8a8a8"></div><div class="a" style="left:870px;top:605px;width:698px;height:1px;background:#a8a8a8"></div><div class="a" style="left:870px;top:629px;width:698px;height:1px;background:#a8a8a8"></div><div class="a" style="left:870px;top:653px;width:698px;height:1px;background:#a8a8a8"></div><div class="a" style="left:870px;top:677px;width:698px;height:1px;background:#a8a8a8"></div><div class="a" style="left:870px;top:701px;width:698px;height:1px;background:#a8a8a8"></div><div class="a" style="left:870px;top:725px;width:698px;height:1px;background:#a8a8a8"></div><div class="a" style="left:870px;top:749px;width:698px;height:1px;background:#a8a8a8"></div><div class="a" style="left:870px;top:773px;width:698px;height:1px;background:#a8a8a8"></div><div class="a" style="left:870px;top:797px;width:698px;height:1px;background:#a8a8a8"></div><div class="a" style="left:870px;top:821px;width:698px;height:1px;background:#a8a8a8"></div><div class="a" style="left:870px;top:845px;width:698px;height:1px;background:#a8a8a8"></div><div class="a" style="left:870px;top:869px;width:698px;height:1px;background:#a8a8a8"></div><div class="a" style="left:870px;top:893px;width:698px;height:1px;background:#a8a8a8"></div><div class="a" style="left:870px;top:917px;width:698px;height:1px;background:#a8a8a8"></div><div class="a" style="left:385px;top:932px;width:1343px;height:2px;background:#2d2d30"></div><div class="a" style="left:385px;top:934px;width:1343px;height:25px;background:#0078d4"></div><div class="t" style="left:391px;top:939px;font-size:11.5px;color:#fff">Sayfa:</div><div class="a" style="left:426px;top:937px;width:30px;height:18px;background:#2d2d30"></div><div class="t c" style="left:426.0px;top:939px;width:30px;font-size:11.5px;color:#fff">1</div><div class="t" style="left:459px;top:939px;font-size:11.5px;color:#fff">/ 5</div><div class="a" style="left:1504px;top:934px;width:1px;height:25px;background:#1a64a8"></div><div class="t" style="left:1512px;top:939px;font-size:11.5px;color:#fff">%100</div><div class="a" style="left:1548px;top:943px;width:8px;height:2px;background:#fff"></div><div class="a" style="left:1560px;top:942px;width:118px;height:4px;background:#8a8a8a;border:1px solid #d0d0d0;border-radius:2px"></div><div class="a" style="left:1616px;top:937px;width:7px;height:13px;background:#eee;border:1px solid #999;border-radius:1px"></div><div class="a" style="left:1563px;top:952px;width:1px;height:2px;background:#9cc8f0"></div><div class="a" style="left:1674px;top:952px;width:1px;height:2px;background:#9cc8f0"></div><svg style="left:1682px;top:940px;" width="8" height="8" viewBox="0 0 8 8"><path d="M4 0v8M0 4h8" stroke="#fff" stroke-width="1.6"/></svg><svg style="left:1718px;top:948px;" width="8" height="8" viewBox="0 0 8 8"><rect x="6" y="0" width="1.2" height="1.2" fill="#fff"/><rect x="6" y="2" width="1.2" height="1.2" fill="#fff"/><rect x="4" y="2" width="1.2" height="1.2" fill="#fff"/><rect x="6" y="4" width="1.2" height="1.2" fill="#fff"/><rect x="4" y="4" width="1.2" height="1.2" fill="#fff"/><rect x="2" y="4" width="1.2" height="1.2" fill="#fff"/><rect x="6" y="6" width="1.2" height="1.2" fill="#fff"/><rect x="4" y="6" width="1.2" height="1.2" fill="#fff"/><rect x="2" y="6" width="1.2" height="1.2" fill="#fff"/><rect x="0" y="6" width="1.2" height="1.2" fill="#fff"/></svg></body></html>
